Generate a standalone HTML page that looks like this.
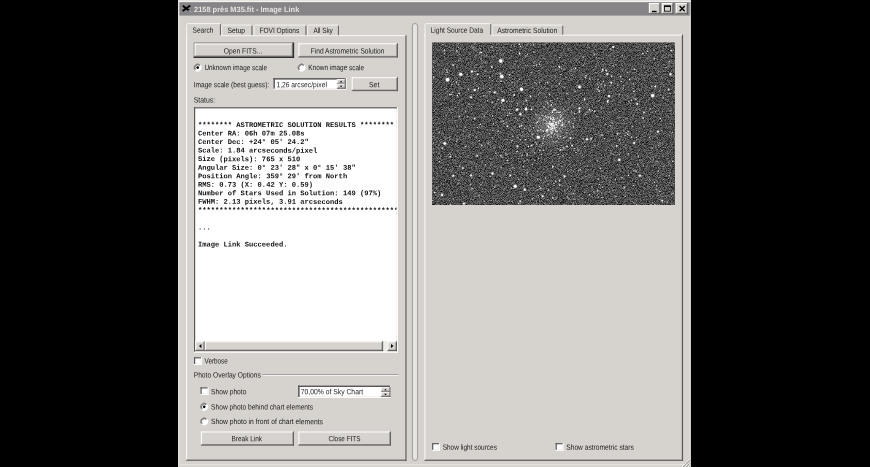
<!DOCTYPE html>
<html lang="en"><head><meta charset="utf-8"><title>2158 près M35.fit - Image Link</title>
<style>
html,body{margin:0;padding:0;background:#000;overflow:hidden}
svg{display:block;position:absolute;left:0;top:0}
text{opacity:0.999}
text{font-family:'Liberation Sans', sans-serif;font-size:7.7px;white-space:pre}
text.m{font-family:'Liberation Mono', monospace;font-size:7.1px;font-weight:bold}
</style></head>
<body>
<svg width="870" height="467" viewBox="0 0 870 467" shape-rendering="geometricPrecision" text-rendering="geometricPrecision">
<rect x="0.00" y="0.00" width="870.00" height="467.00" fill="#000"/>
<rect x="178.00" y="0.00" width="512.90" height="467.00" fill="#d6d3ce"/>
<rect x="178.30" y="0.50" width="512.40" height="1.70" fill="#f4f3f1"/>
<rect x="178.40" y="15.60" width="1.20" height="452.00" fill="#e4e2de"/>
<rect x="178.40" y="1.00" width="1.00" height="14.60" fill="#f0efec"/>
<rect x="689.60" y="15.60" width="0.80" height="451.40" fill="#e6e4e0"/>
<rect x="180.00" y="464.20" width="510.00" height="0.90" fill="#e6e4e0"/>
<rect x="179.40" y="2.20" width="510.30" height="13.40" fill="#868486"/>
<path d="M182.8 5.7 L189.2 10.7 M190.3 5.5 L182.6 11.1" stroke="#000" stroke-width="1.9" fill="none"/><path d="M188.2 10.6 L191.2 11.9" stroke="#aab6cc" stroke-width="0.9" fill="none"/>
<text x="194.00" y="12.00" transform="rotate(0.05 194.0 12.0)" textLength="105.30" lengthAdjust="spacingAndGlyphs" fill="#e6e4e0" font-weight="bold">2158 près M35.fit - Image Link</text>
<rect x="648.90" y="3.00" width="11.50" height="11.20" fill="#d6d3ce"/>
<rect x="648.90" y="3.00" width="10.75" height="1.00" fill="#ffffff"/>
<rect x="648.90" y="3.00" width="1.00" height="10.45" fill="#ffffff"/>
<rect x="649.65" y="12.70" width="10.00" height="0.75" fill="#848284"/>
<rect x="658.90" y="3.75" width="0.75" height="9.70" fill="#848284"/>
<rect x="648.90" y="13.45" width="11.50" height="0.75" fill="#404040"/>
<rect x="659.65" y="3.00" width="0.75" height="11.20" fill="#404040"/>
<rect x="661.80" y="3.00" width="11.70" height="11.20" fill="#d6d3ce"/>
<rect x="661.80" y="3.00" width="10.95" height="1.00" fill="#ffffff"/>
<rect x="661.80" y="3.00" width="1.00" height="10.45" fill="#ffffff"/>
<rect x="662.55" y="12.70" width="10.20" height="0.75" fill="#848284"/>
<rect x="672.00" y="3.75" width="0.75" height="9.70" fill="#848284"/>
<rect x="661.80" y="13.45" width="11.70" height="0.75" fill="#404040"/>
<rect x="672.75" y="3.00" width="0.75" height="11.20" fill="#404040"/>
<rect x="675.70" y="3.00" width="12.30" height="11.20" fill="#d6d3ce"/>
<rect x="675.70" y="3.00" width="11.55" height="1.00" fill="#ffffff"/>
<rect x="675.70" y="3.00" width="1.00" height="10.45" fill="#ffffff"/>
<rect x="676.45" y="12.70" width="10.80" height="0.75" fill="#848284"/>
<rect x="686.50" y="3.75" width="0.75" height="9.70" fill="#848284"/>
<rect x="675.70" y="13.45" width="12.30" height="0.75" fill="#404040"/>
<rect x="687.25" y="3.00" width="0.75" height="11.20" fill="#404040"/>
<rect x="652.00" y="10.80" width="4.60" height="1.40" fill="#000"/>
<rect x="664.5" y="6.2" width="5.9" height="5.0" fill="none" stroke="#000" stroke-width="0.8"/>
<rect x="664.10" y="5.40" width="6.70" height="1.50" fill="#000"/>
<path d="M679.6 6.1 L684.7 11.3 M684.7 6.1 L679.6 11.3" stroke="#000" stroke-width="1.4" fill="none"/>
<rect x="186.20" y="35.20" width="219.30" height="0.90" fill="#ffffff"/>
<rect x="186.20" y="35.20" width="0.90" height="424.55" fill="#ffffff"/>
<rect x="187.20" y="459.35" width="218.30" height="0.40" fill="#9a9896"/>
<rect x="405.10" y="36.20" width="0.40" height="423.55" fill="#9a9896"/>
<rect x="186.20" y="459.75" width="220.30" height="1.00" fill="#545250"/>
<rect x="405.50" y="35.20" width="1.00" height="425.55" fill="#545250"/>
<rect x="222.20" y="24.60" width="30.20" height="10.60" fill="#d6d3ce"/>
<rect x="222.30" y="24.60" width="29.10" height="0.90" fill="#f8f7f6"/>
<rect x="221.30" y="25.60" width="0.90" height="9.60" fill="#f8f7f6"/>
<rect x="251.20" y="25.60" width="0.50" height="9.60" fill="#9a9896"/>
<rect x="251.70" y="25.80" width="0.70" height="9.40" fill="#484848"/>
<rect x="254.50" y="24.60" width="51.90" height="10.60" fill="#d6d3ce"/>
<rect x="254.60" y="24.60" width="50.80" height="0.90" fill="#f8f7f6"/>
<rect x="253.60" y="25.60" width="0.90" height="9.60" fill="#f8f7f6"/>
<rect x="305.20" y="25.60" width="0.50" height="9.60" fill="#9a9896"/>
<rect x="305.70" y="25.80" width="0.70" height="9.40" fill="#484848"/>
<rect x="308.10" y="24.60" width="30.90" height="10.60" fill="#d6d3ce"/>
<rect x="308.20" y="24.60" width="29.80" height="0.90" fill="#f8f7f6"/>
<rect x="307.20" y="25.60" width="0.90" height="9.60" fill="#f8f7f6"/>
<rect x="337.80" y="25.60" width="0.50" height="9.60" fill="#9a9896"/>
<rect x="338.30" y="25.80" width="0.70" height="9.40" fill="#484848"/>
<rect x="187.10" y="23.20" width="33.20" height="13.50" fill="#d6d3ce"/>
<rect x="187.20" y="23.20" width="32.80" height="0.90" fill="#f8f7f6"/>
<rect x="186.20" y="24.20" width="0.90" height="12.50" fill="#f8f7f6"/>
<rect x="219.80" y="24.20" width="0.50" height="11.10" fill="#9a9896"/>
<rect x="220.30" y="24.40" width="0.70" height="10.90" fill="#484848"/>
<text x="192.50" y="32.80" transform="rotate(0.05 192.5 32.8)" textLength="20.90" lengthAdjust="spacingAndGlyphs" fill="#1a1a1a">Search</text>
<text x="227.60" y="33.00" transform="rotate(0.05 227.6 33.0)" textLength="17.50" lengthAdjust="spacingAndGlyphs" fill="#1a1a1a">Setup</text>
<text x="259.40" y="33.00" transform="rotate(0.05 259.4 33.0)" textLength="39.90" lengthAdjust="spacingAndGlyphs" fill="#1a1a1a">FOVI Options</text>
<text x="313.40" y="33.00" transform="rotate(0.05 313.4 33.0)" textLength="19.40" lengthAdjust="spacingAndGlyphs" fill="#1a1a1a">All Sky</text>
<rect x="193.70" y="42.50" width="100.40" height="15.50" fill="#7c7a77"/>
<rect x="193.70" y="56.50" width="100.40" height="1.50" fill="#303030"/>
<rect x="292.70" y="42.50" width="1.40" height="15.50" fill="#303030"/>
<rect x="194.60" y="43.50" width="98.20" height="13.10" fill="#d6d3ce"/>
<rect x="194.60" y="43.50" width="97.65" height="1.00" fill="#ffffff"/>
<rect x="194.60" y="43.50" width="1.00" height="12.55" fill="#ffffff"/>
<rect x="195.15" y="55.50" width="97.10" height="0.55" fill="#848284"/>
<rect x="291.70" y="44.05" width="0.55" height="12.00" fill="#848284"/>
<rect x="194.60" y="56.05" width="98.20" height="0.55" fill="#404040"/>
<rect x="292.25" y="43.50" width="0.55" height="13.10" fill="#404040"/>
<text x="223.70" y="53.40" transform="rotate(0.05 223.7 53.4)" textLength="38.60" lengthAdjust="spacingAndGlyphs" fill="#1a1a1a">Open FITS...</text>
<rect x="298.40" y="43.30" width="99.40" height="14.10" fill="#d6d3ce"/>
<rect x="298.40" y="43.30" width="98.65" height="1.00" fill="#ffffff"/>
<rect x="298.40" y="43.30" width="1.00" height="13.35" fill="#ffffff"/>
<rect x="299.15" y="55.90" width="97.90" height="0.75" fill="#848284"/>
<rect x="396.30" y="44.05" width="0.75" height="12.60" fill="#848284"/>
<rect x="298.40" y="56.65" width="99.40" height="0.75" fill="#404040"/>
<rect x="397.05" y="43.30" width="0.75" height="14.10" fill="#404040"/>
<text x="310.70" y="53.40" transform="rotate(0.05 310.7 53.4)" textLength="73.70" lengthAdjust="spacingAndGlyphs" fill="#1a1a1a">Find Astrometric Solution</text>
<circle cx="197.70" cy="67.60" r="3.60" fill="#ffffff"/>
<path d="M195.15 70.15 A3.6 3.6 0 0 1 200.25 65.05" stroke="#848284" stroke-width="1.0" fill="none"/>
<path d="M195.72 69.58 A2.8 2.8 0 0 1 199.68 65.62" stroke="#404040" stroke-width="0.8" fill="none"/>
<path d="M195.15 70.15 A3.6 3.6 0 0 0 200.25 65.05" stroke="#ffffff" stroke-width="0.9" fill="none"/>
<circle cx="197.70" cy="67.60" r="1.35" fill="#000"/>
<text x="204.40" y="70.10" transform="rotate(0.05 204.4 70.1)" textLength="62.60" lengthAdjust="spacingAndGlyphs" fill="#1a1a1a">Unknown image scale</text>
<circle cx="301.60" cy="67.60" r="3.60" fill="#ffffff"/>
<path d="M299.05 70.15 A3.6 3.6 0 0 1 304.15 65.05" stroke="#848284" stroke-width="1.0" fill="none"/>
<path d="M299.62 69.58 A2.8 2.8 0 0 1 303.58 65.62" stroke="#404040" stroke-width="0.8" fill="none"/>
<path d="M299.05 70.15 A3.6 3.6 0 0 0 304.15 65.05" stroke="#ffffff" stroke-width="0.9" fill="none"/>
<text x="308.30" y="70.10" transform="rotate(0.05 308.3 70.1)" textLength="55.80" lengthAdjust="spacingAndGlyphs" fill="#1a1a1a">Known image scale</text>
<text x="193.70" y="87.15" transform="rotate(0.05 193.7 87.2)" textLength="75.50" lengthAdjust="spacingAndGlyphs" fill="#1a1a1a">Image scale (best guess):</text>
<rect x="273.40" y="78.10" width="73.00" height="11.30" fill="#ffffff"/>
<rect x="273.40" y="88.60" width="73.00" height="0.80" fill="#ffffff"/>
<rect x="345.60" y="78.10" width="0.80" height="11.30" fill="#ffffff"/>
<rect x="274.90" y="88.00" width="70.70" height="0.60" fill="#eceae7"/>
<rect x="345.00" y="79.60" width="0.60" height="9.00" fill="#eceae7"/>
<rect x="273.40" y="78.10" width="72.20" height="1.50" fill="#585656"/>
<rect x="273.40" y="78.10" width="1.50" height="10.50" fill="#585656"/>
<text x="276.40" y="87.15" transform="rotate(0.05 276.4 87.2)" textLength="50.50" lengthAdjust="spacingAndGlyphs" fill="#1a1a1a">1,26 arcsec/pixel</text>
<rect x="336.90" y="79.00" width="8.80" height="4.80" fill="#d6d3ce"/>
<rect x="336.90" y="79.00" width="8.20" height="0.70" fill="#ffffff"/>
<rect x="336.90" y="79.00" width="0.70" height="4.20" fill="#ffffff"/>
<rect x="337.50" y="82.60" width="7.60" height="0.60" fill="#848284"/>
<rect x="344.50" y="79.60" width="0.60" height="3.60" fill="#848284"/>
<rect x="336.90" y="83.20" width="8.80" height="0.60" fill="#404040"/>
<rect x="345.10" y="79.00" width="0.60" height="4.80" fill="#404040"/>
<rect x="336.90" y="83.80" width="8.80" height="4.80" fill="#d6d3ce"/>
<rect x="336.90" y="83.80" width="8.20" height="0.70" fill="#ffffff"/>
<rect x="336.90" y="83.80" width="0.70" height="4.20" fill="#ffffff"/>
<rect x="337.50" y="87.40" width="7.60" height="0.60" fill="#848284"/>
<rect x="344.50" y="84.40" width="0.60" height="3.60" fill="#848284"/>
<rect x="336.90" y="88.00" width="8.80" height="0.60" fill="#404040"/>
<rect x="345.10" y="83.80" width="0.60" height="4.80" fill="#404040"/>
<path d="M339.70 82.20 L341.10 80.80 L342.50 82.20 Z M339.70 85.70 L341.10 87.10 L342.50 85.70 Z" fill="#000"/>
<rect x="351.70" y="77.20" width="46.10" height="13.90" fill="#d6d3ce"/>
<rect x="351.70" y="77.20" width="45.35" height="1.00" fill="#ffffff"/>
<rect x="351.70" y="77.20" width="1.00" height="13.15" fill="#ffffff"/>
<rect x="352.45" y="89.60" width="44.60" height="0.75" fill="#848284"/>
<rect x="396.30" y="77.95" width="0.75" height="12.40" fill="#848284"/>
<rect x="351.70" y="90.35" width="46.10" height="0.75" fill="#404040"/>
<rect x="397.05" y="77.20" width="0.75" height="13.90" fill="#404040"/>
<text x="369.00" y="87.15" transform="rotate(0.05 369.0 87.2)" textLength="10.30" lengthAdjust="spacingAndGlyphs" fill="#1a1a1a">Set</text>
<text x="193.70" y="102.60" transform="rotate(0.05 193.7 102.6)" textLength="21.50" lengthAdjust="spacingAndGlyphs" fill="#1a1a1a">Status:</text>
<rect x="194.00" y="107.20" width="203.80" height="245.30" fill="#ffffff"/>
<rect x="194.00" y="351.70" width="203.80" height="0.80" fill="#ffffff"/>
<rect x="397.00" y="107.20" width="0.80" height="245.30" fill="#ffffff"/>
<rect x="195.20" y="351.10" width="201.80" height="0.60" fill="#eceae7"/>
<rect x="396.40" y="108.40" width="0.60" height="243.30" fill="#eceae7"/>
<rect x="194.00" y="107.20" width="203.00" height="1.20" fill="#585656"/>
<rect x="194.00" y="107.20" width="1.20" height="244.50" fill="#585656"/>
<clipPath id="tc"><rect x="195.3" y="108.3" width="201.2" height="233"/></clipPath>
<g clip-path="url(#tc)" font-family="'Liberation Mono', monospace" font-size="7.1" fill="#111" xml:space="preserve">
<text class="m" x="197.9" y="126.98" transform="rotate(0.04 197.9 127.0)" textLength="196.19" lengthAdjust="spacingAndGlyphs">******** ASTROMETRIC SOLUTION RESULTS ********</text>
<text class="m" x="197.9" y="135.52" transform="rotate(0.04 197.9 135.5)" textLength="106.62" lengthAdjust="spacingAndGlyphs">Center RA: 06h 07m 25.08s</text>
<text class="m" x="197.9" y="144.06" transform="rotate(0.04 197.9 144.1)" textLength="110.89" lengthAdjust="spacingAndGlyphs">Center Dec: +24° 05' 24.2&quot;</text>
<text class="m" x="197.9" y="152.59" transform="rotate(0.04 197.9 152.6)" textLength="119.42" lengthAdjust="spacingAndGlyphs">Scale: 1.84 arcseconds/pixel</text>
<text class="m" x="197.9" y="161.12" transform="rotate(0.04 197.9 161.1)" textLength="102.36" lengthAdjust="spacingAndGlyphs">Size (pixels): 765 x 510</text>
<text class="m" x="197.9" y="169.66" transform="rotate(0.04 197.9 169.7)" textLength="157.80" lengthAdjust="spacingAndGlyphs">Angular Size: 0° 23' 28&quot; x 0° 15' 38&quot;</text>
<text class="m" x="197.9" y="178.19" transform="rotate(0.04 197.9 178.2)" textLength="149.27" lengthAdjust="spacingAndGlyphs">Position Angle: 359° 29' from North</text>
<text class="m" x="197.9" y="186.73" transform="rotate(0.04 197.9 186.7)" textLength="115.15" lengthAdjust="spacingAndGlyphs">RMS: 0.73 (X: 0.42 Y: 0.59)</text>
<text class="m" x="197.9" y="195.26" transform="rotate(0.04 197.9 195.3)" textLength="183.39" lengthAdjust="spacingAndGlyphs">Number of Stars Used in Solution: 149 (97%)</text>
<text class="m" x="197.9" y="203.80" transform="rotate(0.04 197.9 203.8)" textLength="145.01" lengthAdjust="spacingAndGlyphs">FWHM: 2.13 pixels, 3.91 arcseconds</text>
<text class="m" x="197.9" y="212.34" transform="rotate(0.04 197.9 212.3)" textLength="255.90" lengthAdjust="spacingAndGlyphs">************************************************************</text>
<text class="m" x="197.9" y="229.41" transform="rotate(0.04 197.9 229.4)" textLength="12.79" lengthAdjust="spacingAndGlyphs">...</text>
<text class="m" x="197.9" y="246.48" transform="rotate(0.04 197.9 246.5)" textLength="89.56" lengthAdjust="spacingAndGlyphs">Image Link Succeeded.</text>
</g>
<rect x="195.30" y="341.30" width="201.70" height="9.80" fill="#eeece9"/>
<rect x="195.30" y="341.30" width="9.50" height="9.80" fill="#d6d3ce"/>
<rect x="195.30" y="341.30" width="8.75" height="1.00" fill="#ffffff"/>
<rect x="195.30" y="341.30" width="1.00" height="9.05" fill="#ffffff"/>
<rect x="196.05" y="349.60" width="8.00" height="0.75" fill="#848284"/>
<rect x="203.30" y="342.05" width="0.75" height="8.30" fill="#848284"/>
<rect x="195.30" y="350.35" width="9.50" height="0.75" fill="#404040"/>
<rect x="204.05" y="341.30" width="0.75" height="9.80" fill="#404040"/>
<rect x="387.40" y="341.30" width="9.60" height="9.80" fill="#d6d3ce"/>
<rect x="387.40" y="341.30" width="8.85" height="1.00" fill="#ffffff"/>
<rect x="387.40" y="341.30" width="1.00" height="9.05" fill="#ffffff"/>
<rect x="388.15" y="349.60" width="8.10" height="0.75" fill="#848284"/>
<rect x="395.50" y="342.05" width="0.75" height="8.30" fill="#848284"/>
<rect x="387.40" y="350.35" width="9.60" height="0.75" fill="#404040"/>
<rect x="396.25" y="341.30" width="0.75" height="9.80" fill="#404040"/>
<rect x="204.80" y="341.30" width="178.30" height="9.80" fill="#d6d3ce"/>
<rect x="204.80" y="341.30" width="177.55" height="1.00" fill="#ffffff"/>
<rect x="204.80" y="341.30" width="1.00" height="9.05" fill="#ffffff"/>
<rect x="205.55" y="349.60" width="176.80" height="0.75" fill="#848284"/>
<rect x="381.60" y="342.05" width="0.75" height="8.30" fill="#848284"/>
<rect x="204.80" y="350.35" width="178.30" height="0.75" fill="#404040"/>
<rect x="382.35" y="341.30" width="0.75" height="9.80" fill="#404040"/>
<path d="M201.4 343.9 L199.0 346.1 L201.4 348.3 Z M391.0 343.9 L393.5 346.0 L391.0 348.1 Z" fill="#000"/>
<rect x="194.00" y="357.20" width="7.80" height="7.50" fill="#ffffff"/>
<rect x="194.00" y="363.90" width="7.80" height="0.80" fill="#ffffff"/>
<rect x="201.00" y="357.20" width="0.80" height="7.50" fill="#ffffff"/>
<rect x="195.20" y="363.30" width="5.80" height="0.60" fill="#eceae7"/>
<rect x="200.40" y="358.40" width="0.60" height="5.50" fill="#eceae7"/>
<rect x="194.00" y="357.20" width="7.00" height="1.20" fill="#585656"/>
<rect x="194.00" y="357.20" width="1.20" height="6.70" fill="#585656"/>
<text x="204.50" y="363.60" transform="rotate(0.05 204.5 363.6)" textLength="23.30" lengthAdjust="spacingAndGlyphs" fill="#1a1a1a">Verbose</text>
<text x="193.70" y="377.55" transform="rotate(0.05 193.7 377.6)" textLength="67.10" lengthAdjust="spacingAndGlyphs" fill="#1a1a1a">Photo Overlay Options</text>
<rect x="262.40" y="374.40" width="136.00" height="0.75" fill="#848284"/>
<rect x="262.40" y="375.15" width="136.00" height="0.75" fill="#ffffff"/>
<rect x="200.50" y="387.30" width="7.90" height="7.60" fill="#ffffff"/>
<rect x="200.50" y="394.10" width="7.90" height="0.80" fill="#ffffff"/>
<rect x="207.60" y="387.30" width="0.80" height="7.60" fill="#ffffff"/>
<rect x="201.70" y="393.50" width="5.90" height="0.60" fill="#eceae7"/>
<rect x="207.00" y="388.50" width="0.60" height="5.60" fill="#eceae7"/>
<rect x="200.50" y="387.30" width="7.10" height="1.20" fill="#585656"/>
<rect x="200.50" y="387.30" width="1.20" height="6.80" fill="#585656"/>
<text x="211.10" y="394.25" transform="rotate(0.05 211.1 394.2)" textLength="35.30" lengthAdjust="spacingAndGlyphs" fill="#1a1a1a">Show photo</text>
<rect x="298.10" y="385.50" width="92.90" height="12.30" fill="#ffffff"/>
<rect x="298.10" y="397.00" width="92.90" height="0.80" fill="#ffffff"/>
<rect x="390.20" y="385.50" width="0.80" height="12.30" fill="#ffffff"/>
<rect x="299.60" y="396.40" width="90.60" height="0.60" fill="#eceae7"/>
<rect x="389.60" y="387.00" width="0.60" height="10.00" fill="#eceae7"/>
<rect x="298.10" y="385.50" width="92.10" height="1.50" fill="#585656"/>
<rect x="298.10" y="385.50" width="1.50" height="11.50" fill="#585656"/>
<text x="300.70" y="394.25" transform="rotate(0.05 300.7 394.2)" textLength="62.40" lengthAdjust="spacingAndGlyphs" fill="#1a1a1a">70,00% of Sky Chart</text>
<rect x="381.00" y="387.00" width="9.40" height="4.90" fill="#d6d3ce"/>
<rect x="381.00" y="387.00" width="8.80" height="0.70" fill="#ffffff"/>
<rect x="381.00" y="387.00" width="0.70" height="4.30" fill="#ffffff"/>
<rect x="381.60" y="390.70" width="8.20" height="0.60" fill="#848284"/>
<rect x="389.20" y="387.60" width="0.60" height="3.70" fill="#848284"/>
<rect x="381.00" y="391.30" width="9.40" height="0.60" fill="#404040"/>
<rect x="389.80" y="387.00" width="0.60" height="4.90" fill="#404040"/>
<rect x="381.00" y="391.90" width="9.40" height="4.90" fill="#d6d3ce"/>
<rect x="381.00" y="391.90" width="8.80" height="0.70" fill="#ffffff"/>
<rect x="381.00" y="391.90" width="0.70" height="4.30" fill="#ffffff"/>
<rect x="381.60" y="395.60" width="8.20" height="0.60" fill="#848284"/>
<rect x="389.20" y="392.50" width="0.60" height="3.70" fill="#848284"/>
<rect x="381.00" y="396.20" width="9.40" height="0.60" fill="#404040"/>
<rect x="389.80" y="391.90" width="0.60" height="4.90" fill="#404040"/>
<path d="M384.10 390.30 L385.50 388.90 L386.90 390.30 Z M384.10 393.80 L385.50 395.20 L386.90 393.80 Z" fill="#000"/>
<circle cx="204.20" cy="406.80" r="3.60" fill="#ffffff"/>
<path d="M201.65 409.35 A3.6 3.6 0 0 1 206.75 404.25" stroke="#848284" stroke-width="1.0" fill="none"/>
<path d="M202.22 408.78 A2.8 2.8 0 0 1 206.18 404.82" stroke="#404040" stroke-width="0.8" fill="none"/>
<path d="M201.65 409.35 A3.6 3.6 0 0 0 206.75 404.25" stroke="#ffffff" stroke-width="0.9" fill="none"/>
<circle cx="204.20" cy="406.80" r="1.35" fill="#000"/>
<text x="211.10" y="409.40" transform="rotate(0.05 211.1 409.4)" textLength="102.10" lengthAdjust="spacingAndGlyphs" fill="#1a1a1a">Show photo behind chart elements</text>
<circle cx="204.20" cy="421.50" r="3.60" fill="#ffffff"/>
<path d="M201.65 424.05 A3.6 3.6 0 0 1 206.75 418.95" stroke="#848284" stroke-width="1.0" fill="none"/>
<path d="M202.22 423.48 A2.8 2.8 0 0 1 206.18 419.52" stroke="#404040" stroke-width="0.8" fill="none"/>
<path d="M201.65 424.05 A3.6 3.6 0 0 0 206.75 418.95" stroke="#ffffff" stroke-width="0.9" fill="none"/>
<text x="211.10" y="424.05" transform="rotate(0.05 211.1 424.1)" textLength="111.80" lengthAdjust="spacingAndGlyphs" fill="#1a1a1a">Show photo in front of chart elements</text>
<rect x="200.90" y="431.50" width="93.10" height="14.00" fill="#d6d3ce"/>
<rect x="200.90" y="431.50" width="92.35" height="1.00" fill="#ffffff"/>
<rect x="200.90" y="431.50" width="1.00" height="13.25" fill="#ffffff"/>
<rect x="201.65" y="444.00" width="91.60" height="0.75" fill="#848284"/>
<rect x="292.50" y="432.25" width="0.75" height="12.50" fill="#848284"/>
<rect x="200.90" y="444.75" width="93.10" height="0.75" fill="#404040"/>
<rect x="293.25" y="431.50" width="0.75" height="14.00" fill="#404040"/>
<text x="231.50" y="441.30" transform="rotate(0.05 231.5 441.3)" textLength="30.60" lengthAdjust="spacingAndGlyphs" fill="#1a1a1a">Break Link</text>
<rect x="298.40" y="431.50" width="92.50" height="14.00" fill="#d6d3ce"/>
<rect x="298.40" y="431.50" width="91.75" height="1.00" fill="#ffffff"/>
<rect x="298.40" y="431.50" width="1.00" height="13.25" fill="#ffffff"/>
<rect x="299.15" y="444.00" width="91.00" height="0.75" fill="#848284"/>
<rect x="389.40" y="432.25" width="0.75" height="12.50" fill="#848284"/>
<rect x="298.40" y="444.75" width="92.50" height="0.75" fill="#404040"/>
<rect x="390.15" y="431.50" width="0.75" height="14.00" fill="#404040"/>
<text x="328.60" y="441.30" transform="rotate(0.05 328.6 441.3)" textLength="31.90" lengthAdjust="spacingAndGlyphs" fill="#1a1a1a">Close FITS</text>
<rect x="412.4" y="23.5" width="5.2" height="437" rx="2.6" fill="#e6e4e2" stroke="#8c8a88" stroke-width="0.8"/>
<rect x="424.50" y="34.60" width="257.55" height="0.90" fill="#ffffff"/>
<rect x="424.50" y="34.60" width="0.90" height="425.20" fill="#ffffff"/>
<rect x="425.50" y="459.40" width="256.55" height="0.40" fill="#9a9896"/>
<rect x="681.65" y="35.60" width="0.40" height="424.20" fill="#9a9896"/>
<rect x="424.50" y="459.80" width="258.55" height="1.00" fill="#545250"/>
<rect x="682.05" y="34.60" width="1.00" height="426.20" fill="#545250"/>
<rect x="492.50" y="24.60" width="70.70" height="10.00" fill="#d6d3ce"/>
<rect x="492.60" y="24.60" width="69.60" height="0.90" fill="#f8f7f6"/>
<rect x="491.60" y="25.60" width="0.90" height="9.00" fill="#f8f7f6"/>
<rect x="562.00" y="25.60" width="0.50" height="9.00" fill="#9a9896"/>
<rect x="562.50" y="25.80" width="0.70" height="8.80" fill="#484848"/>
<rect x="425.40" y="23.20" width="65.10" height="12.90" fill="#d6d3ce"/>
<rect x="425.50" y="23.20" width="64.70" height="0.90" fill="#f8f7f6"/>
<rect x="424.50" y="24.20" width="0.90" height="11.90" fill="#f8f7f6"/>
<rect x="490.00" y="24.20" width="0.50" height="10.50" fill="#9a9896"/>
<rect x="490.50" y="24.40" width="0.70" height="10.30" fill="#484848"/>
<text x="430.70" y="32.80" transform="rotate(0.05 430.7 32.8)" textLength="52.40" lengthAdjust="spacingAndGlyphs" fill="#1a1a1a">Light Source Data</text>
<text x="497.30" y="33.00" transform="rotate(0.05 497.3 33.0)" textLength="60.00" lengthAdjust="spacingAndGlyphs" fill="#1a1a1a">Astrometric Solution</text>
<g id="stars" transform="translate(432.2,42.6)"><filter id="nz" x="0" y="0" width="100%" height="100%" color-interpolation-filters="sRGB"><feTurbulence type="fractalNoise" baseFrequency="1.37" numOctaves="1" seed="7" stitchTiles="noStitch"/><feColorMatrix type="matrix" values="1 0 0 0 0 1 0 0 0 0 1 0 0 0 0 0 0 0 0 1"/><feGaussianBlur stdDeviation="0.5"/><feColorMatrix type="matrix" values="1.0 0 0 0 -0.205 1.0 0 0 0 -0.205 1.0 0 0 0 -0.205 0 0 0 0 1"/></filter>
<radialGradient id="cg" cx="119" cy="82" r="26" gradientUnits="userSpaceOnUse"><stop offset="0" stop-color="#fff" stop-opacity="0.3"/><stop offset="0.35" stop-color="#fff" stop-opacity="0.16"/><stop offset="1" stop-color="#fff" stop-opacity="0"/></radialGradient>
<clipPath id="sc"><rect width="242.6" height="162.4"/></clipPath>
<g clip-path="url(#sc)">
<rect width="243" height="163" fill="#484848"/>
<rect width="243" height="163" filter="url(#nz)"/>
<circle cx="119" cy="82" r="26" fill="url(#cg)"/>
<g fill="#fff"><circle cx="101.2" cy="1.7" r="0.7" opacity="0.79"/><circle cx="207.8" cy="151.9" r="0.5" opacity="0.66"/><circle cx="39.3" cy="20.3" r="0.5" opacity="0.49"/><circle cx="152.4" cy="99.7" r="0.45" opacity="0.55"/><circle cx="232.8" cy="14.9" r="0.6" opacity="0.58"/><circle cx="122.5" cy="24.1" r="0.6" opacity="0.39"/><circle cx="203.4" cy="52.5" r="0.5" opacity="0.54"/><circle cx="235.1" cy="159.5" r="0.6" opacity="0.58"/><circle cx="1.6" cy="108.2" r="0.45" opacity="0.77"/><circle cx="43.5" cy="16.2" r="0.5" opacity="0.41"/><circle cx="165.6" cy="29.6" r="0.5" opacity="0.48"/><circle cx="127.2" cy="115.6" r="0.7" opacity="0.53"/><circle cx="9.8" cy="19.5" r="0.5" opacity="0.47"/><circle cx="194.9" cy="90.5" r="0.45" opacity="0.49"/><circle cx="105.4" cy="149.3" r="0.45" opacity="0.37"/><circle cx="39.9" cy="160.3" r="0.7" opacity="0.36"/><circle cx="234.5" cy="57.0" r="0.5" opacity="0.44"/><circle cx="78.7" cy="8.0" r="0.6" opacity="0.59"/><circle cx="94.3" cy="130.2" r="0.45" opacity="0.78"/><circle cx="187.7" cy="59.9" r="0.6" opacity="0.63"/><circle cx="29.5" cy="101.4" r="0.4" opacity="0.69"/><circle cx="79.2" cy="99.4" r="0.5" opacity="0.86"/><circle cx="133.6" cy="59.4" r="0.6" opacity="0.73"/><circle cx="135.2" cy="13.0" r="0.45" opacity="0.84"/><circle cx="81.5" cy="33.1" r="0.45" opacity="0.51"/><circle cx="130.5" cy="84.7" r="0.4" opacity="0.43"/><circle cx="159.8" cy="144.4" r="0.7" opacity="0.68"/><circle cx="194.0" cy="15.6" r="0.55" opacity="0.76"/><circle cx="16.1" cy="122.5" r="0.5" opacity="0.58"/><circle cx="59.1" cy="143.2" r="0.4" opacity="0.56"/><circle cx="42.8" cy="29.0" r="0.55" opacity="0.72"/><circle cx="125.9" cy="40.6" r="0.5" opacity="0.63"/><circle cx="101.5" cy="19.6" r="0.6" opacity="0.60"/><circle cx="47.4" cy="101.3" r="0.45" opacity="0.76"/><circle cx="129.0" cy="38.0" r="0.55" opacity="0.51"/><circle cx="130.8" cy="113.0" r="0.6" opacity="0.84"/><circle cx="14.4" cy="126.7" r="0.4" opacity="0.55"/><circle cx="125.6" cy="93.6" r="0.6" opacity="0.77"/><circle cx="38.0" cy="143.5" r="0.6" opacity="0.37"/><circle cx="181.3" cy="111.8" r="0.5" opacity="0.52"/><circle cx="148.3" cy="50.8" r="0.5" opacity="0.61"/><circle cx="64.4" cy="4.8" r="0.5" opacity="0.42"/><circle cx="0.5" cy="158.0" r="0.7" opacity="0.86"/><circle cx="7.4" cy="98.2" r="0.45" opacity="0.82"/><circle cx="119.2" cy="44.4" r="0.45" opacity="0.85"/><circle cx="176.3" cy="137.9" r="0.4" opacity="0.69"/><circle cx="89.5" cy="141.0" r="0.5" opacity="0.45"/><circle cx="19.9" cy="133.3" r="0.45" opacity="0.53"/><circle cx="48.8" cy="24.4" r="0.55" opacity="0.37"/><circle cx="242.3" cy="63.9" r="0.7" opacity="0.37"/><circle cx="24.2" cy="24.2" r="0.45" opacity="0.49"/><circle cx="129.4" cy="25.8" r="0.6" opacity="0.51"/><circle cx="208.1" cy="15.0" r="0.55" opacity="0.46"/><circle cx="122.5" cy="156.7" r="0.55" opacity="0.36"/><circle cx="126.4" cy="95.9" r="0.5" opacity="0.67"/><circle cx="190.0" cy="26.7" r="0.5" opacity="0.59"/><circle cx="90.3" cy="4.5" r="0.5" opacity="0.54"/><circle cx="198.4" cy="107.3" r="0.4" opacity="0.53"/><circle cx="106.3" cy="52.0" r="0.5" opacity="0.79"/><circle cx="30.5" cy="92.2" r="0.4" opacity="0.66"/><circle cx="118.1" cy="19.3" r="0.55" opacity="0.45"/><circle cx="228.4" cy="50.3" r="0.45" opacity="0.64"/><circle cx="111.9" cy="76.5" r="0.5" opacity="0.47"/><circle cx="54.0" cy="121.5" r="0.45" opacity="0.56"/><circle cx="132.0" cy="162.9" r="0.6" opacity="0.89"/><circle cx="224.5" cy="146.7" r="0.55" opacity="0.67"/><circle cx="133.9" cy="34.9" r="0.6" opacity="0.75"/><circle cx="206.4" cy="2.4" r="0.45" opacity="0.39"/><circle cx="218.6" cy="11.4" r="0.7" opacity="0.42"/><circle cx="64.5" cy="38.4" r="0.5" opacity="0.47"/><circle cx="89.9" cy="112.3" r="0.6" opacity="0.57"/><circle cx="60.5" cy="73.4" r="0.7" opacity="0.85"/><circle cx="26.4" cy="4.9" r="0.55" opacity="0.85"/><circle cx="89.4" cy="65.2" r="0.6" opacity="0.40"/><circle cx="113.1" cy="53.4" r="0.5" opacity="0.52"/><circle cx="137.6" cy="27.9" r="0.6" opacity="0.69"/><circle cx="223.7" cy="42.7" r="0.6" opacity="0.78"/><circle cx="42.8" cy="0.9" r="0.6" opacity="0.75"/><circle cx="5.8" cy="153.2" r="0.5" opacity="0.73"/><circle cx="49.0" cy="102.0" r="0.4" opacity="0.75"/><circle cx="89.2" cy="152.6" r="0.5" opacity="0.48"/><circle cx="223.6" cy="33.3" r="0.55" opacity="0.35"/><circle cx="36.8" cy="94.9" r="0.7" opacity="0.42"/><circle cx="51.8" cy="136.5" r="0.55" opacity="0.52"/><circle cx="69.5" cy="34.2" r="0.5" opacity="0.86"/><circle cx="141.2" cy="128.9" r="0.6" opacity="0.75"/><circle cx="196.9" cy="93.0" r="0.5" opacity="0.63"/><circle cx="130.5" cy="107.3" r="0.7" opacity="0.74"/><circle cx="222.8" cy="25.9" r="0.5" opacity="0.38"/><circle cx="23.9" cy="146.7" r="0.4" opacity="0.50"/><circle cx="76.5" cy="67.3" r="0.5" opacity="0.61"/><circle cx="238.5" cy="112.2" r="0.4" opacity="0.76"/><circle cx="55.9" cy="101.2" r="0.7" opacity="0.60"/><circle cx="152.3" cy="58.0" r="0.7" opacity="0.72"/><circle cx="221.9" cy="63.1" r="0.5" opacity="0.53"/><circle cx="146.0" cy="70.1" r="0.5" opacity="0.48"/><circle cx="145.9" cy="74.6" r="0.5" opacity="0.72"/><circle cx="121.0" cy="98.9" r="0.7" opacity="0.56"/><circle cx="167.7" cy="92.6" r="0.5" opacity="0.79"/><circle cx="32.1" cy="73.6" r="0.4" opacity="0.61"/><circle cx="89.3" cy="66.7" r="0.5" opacity="0.47"/><circle cx="123.5" cy="80.1" r="0.7" opacity="0.88"/><circle cx="55.5" cy="67.7" r="0.4" opacity="0.43"/><circle cx="129.7" cy="124.0" r="0.6" opacity="0.87"/><circle cx="29.9" cy="63.1" r="0.5" opacity="0.39"/><circle cx="160.2" cy="0.2" r="0.5" opacity="0.49"/><circle cx="60.5" cy="87.7" r="0.5" opacity="0.87"/><circle cx="236.8" cy="50.6" r="0.5" opacity="0.57"/><circle cx="141.2" cy="96.0" r="0.5" opacity="0.70"/><circle cx="57.3" cy="16.2" r="0.6" opacity="0.51"/><circle cx="14.8" cy="21.0" r="0.55" opacity="0.46"/><circle cx="65.1" cy="139.0" r="0.5" opacity="0.38"/><circle cx="227.6" cy="148.8" r="0.7" opacity="0.76"/><circle cx="172.9" cy="7.3" r="0.7" opacity="0.43"/><circle cx="8.7" cy="61.6" r="0.55" opacity="0.58"/><circle cx="42.1" cy="25.2" r="0.55" opacity="0.63"/><circle cx="119.5" cy="17.1" r="0.6" opacity="0.39"/><circle cx="37.9" cy="11.7" r="0.7" opacity="0.54"/><circle cx="226.8" cy="55.8" r="0.45" opacity="0.51"/><circle cx="131.6" cy="66.1" r="0.5" opacity="0.44"/><circle cx="114.8" cy="90.0" r="0.55" opacity="0.74"/><circle cx="93.5" cy="72.4" r="0.5" opacity="0.42"/><circle cx="166.1" cy="90.5" r="0.55" opacity="0.49"/><circle cx="168.1" cy="47.2" r="0.4" opacity="0.63"/><circle cx="89.6" cy="65.4" r="0.45" opacity="0.56"/><circle cx="218.7" cy="17.8" r="0.55" opacity="0.44"/><circle cx="195.2" cy="30.1" r="0.6" opacity="0.81"/><circle cx="26.5" cy="17.6" r="0.45" opacity="0.88"/><circle cx="174.7" cy="73.2" r="0.4" opacity="0.57"/><circle cx="69.4" cy="85.4" r="0.45" opacity="0.79"/><circle cx="180.3" cy="103.8" r="0.5" opacity="0.43"/><circle cx="59.3" cy="19.5" r="0.5" opacity="0.71"/><circle cx="135.6" cy="128.9" r="0.55" opacity="0.78"/><circle cx="51.9" cy="63.7" r="0.4" opacity="0.51"/><circle cx="218.3" cy="116.0" r="0.55" opacity="0.59"/><circle cx="101.7" cy="161.5" r="0.5" opacity="0.61"/><circle cx="142.8" cy="57.1" r="0.55" opacity="0.45"/><circle cx="53.2" cy="122.4" r="0.7" opacity="0.67"/><circle cx="209.6" cy="90.4" r="0.45" opacity="0.42"/><circle cx="156.0" cy="134.9" r="0.4" opacity="0.42"/><circle cx="221.5" cy="123.4" r="0.4" opacity="0.49"/><circle cx="201.5" cy="48.7" r="0.7" opacity="0.80"/><circle cx="117.0" cy="95.3" r="0.5" opacity="0.70"/><circle cx="6.1" cy="105.5" r="0.4" opacity="0.52"/><circle cx="237.1" cy="12.0" r="0.45" opacity="0.60"/><circle cx="236.8" cy="120.6" r="0.45" opacity="0.70"/><circle cx="127.2" cy="139.0" r="0.5" opacity="0.82"/><circle cx="105.1" cy="136.5" r="0.6" opacity="0.86"/><circle cx="94.8" cy="2.3" r="0.5" opacity="0.42"/><circle cx="169.6" cy="147.6" r="0.5" opacity="0.42"/><circle cx="66.4" cy="85.7" r="0.4" opacity="0.41"/><circle cx="97.8" cy="52.7" r="0.55" opacity="0.62"/><circle cx="44.3" cy="122.2" r="0.5" opacity="0.36"/><circle cx="29.6" cy="62.2" r="0.4" opacity="0.45"/><circle cx="99.1" cy="2.1" r="0.55" opacity="0.60"/><circle cx="122.1" cy="91.9" r="0.5" opacity="0.50"/><circle cx="99.2" cy="30.1" r="0.6" opacity="0.74"/><circle cx="236.8" cy="15.8" r="0.5" opacity="0.36"/><circle cx="186.8" cy="75.2" r="0.55" opacity="0.80"/><circle cx="25.3" cy="124.1" r="0.5" opacity="0.59"/><circle cx="31.9" cy="6.8" r="0.45" opacity="0.80"/><circle cx="106.6" cy="154.8" r="0.5" opacity="0.37"/><circle cx="77.3" cy="67.2" r="0.7" opacity="0.54"/><circle cx="136.4" cy="79.6" r="0.6" opacity="0.53"/><circle cx="19.4" cy="127.6" r="0.5" opacity="0.62"/><circle cx="185.3" cy="87.3" r="0.5" opacity="0.50"/><circle cx="77.8" cy="127.7" r="0.5" opacity="0.89"/><circle cx="134.0" cy="50.5" r="0.7" opacity="0.64"/><circle cx="168.2" cy="55.2" r="0.4" opacity="0.60"/><circle cx="105.4" cy="128.8" r="0.5" opacity="0.75"/><circle cx="139.6" cy="69.6" r="0.6" opacity="0.77"/><circle cx="198.7" cy="74.9" r="0.5" opacity="0.80"/><circle cx="230.8" cy="15.8" r="0.4" opacity="0.74"/><circle cx="177.5" cy="149.3" r="0.7" opacity="0.77"/><circle cx="235.3" cy="108.6" r="0.6" opacity="0.37"/><circle cx="90.7" cy="138.9" r="0.4" opacity="0.46"/><circle cx="6.3" cy="110.5" r="0.55" opacity="0.71"/><circle cx="48.8" cy="141.9" r="0.5" opacity="0.81"/><circle cx="102.6" cy="39.9" r="0.45" opacity="0.86"/><circle cx="215.0" cy="0.4" r="0.45" opacity="0.84"/><circle cx="204.4" cy="129.3" r="0.5" opacity="0.75"/><circle cx="183.7" cy="153.9" r="0.6" opacity="0.81"/><circle cx="226.6" cy="22.6" r="0.5" opacity="0.63"/><circle cx="230.5" cy="100.1" r="0.5" opacity="0.37"/><circle cx="38.5" cy="141.9" r="0.7" opacity="0.74"/><circle cx="79.8" cy="70.8" r="0.5" opacity="0.78"/><circle cx="123.5" cy="34.4" r="0.4" opacity="0.58"/><circle cx="108.0" cy="19.1" r="0.6" opacity="0.45"/><circle cx="90.4" cy="130.8" r="0.4" opacity="0.89"/><circle cx="66.8" cy="55.5" r="0.7" opacity="0.47"/><circle cx="208.0" cy="157.1" r="0.5" opacity="0.76"/><circle cx="64.5" cy="79.4" r="0.7" opacity="0.35"/><circle cx="79.7" cy="122.2" r="0.55" opacity="0.71"/><circle cx="6.3" cy="59.6" r="0.6" opacity="0.77"/><circle cx="5.4" cy="115.8" r="0.45" opacity="0.77"/><circle cx="242.1" cy="118.7" r="0.5" opacity="0.60"/><circle cx="8.9" cy="128.3" r="0.55" opacity="0.39"/><circle cx="137.4" cy="127.8" r="0.45" opacity="0.68"/><circle cx="195.1" cy="52.9" r="0.7" opacity="0.36"/><circle cx="26.2" cy="141.0" r="0.55" opacity="0.73"/><circle cx="33.3" cy="68.5" r="0.7" opacity="0.90"/><circle cx="171.6" cy="122.5" r="0.7" opacity="0.61"/><circle cx="40.0" cy="146.1" r="0.7" opacity="0.89"/><circle cx="87.1" cy="36.7" r="0.7" opacity="0.74"/><circle cx="224.9" cy="118.9" r="0.5" opacity="0.75"/><circle cx="199.2" cy="150.4" r="0.5" opacity="0.40"/><circle cx="60.0" cy="139.5" r="0.45" opacity="0.65"/><circle cx="155.7" cy="1.6" r="0.5" opacity="0.75"/><circle cx="117.8" cy="111.1" r="0.5" opacity="0.49"/><circle cx="26.4" cy="41.7" r="0.7" opacity="0.76"/><circle cx="132.6" cy="1.2" r="0.7" opacity="0.35"/><circle cx="172.8" cy="21.9" r="0.45" opacity="0.71"/><circle cx="97.8" cy="82.8" r="0.6" opacity="0.40"/><circle cx="192.0" cy="13.8" r="0.5" opacity="0.56"/><circle cx="221.3" cy="116.3" r="0.55" opacity="0.66"/><circle cx="102.2" cy="110.0" r="0.7" opacity="0.74"/><circle cx="40.8" cy="5.8" r="0.6" opacity="0.44"/><circle cx="13.8" cy="32.3" r="0.55" opacity="0.80"/><circle cx="170.4" cy="98.8" r="0.45" opacity="0.71"/><circle cx="146.0" cy="106.6" r="0.5" opacity="0.43"/><circle cx="89.8" cy="113.4" r="0.5" opacity="0.75"/><circle cx="164.2" cy="11.8" r="0.5" opacity="0.52"/><circle cx="24.4" cy="0.3" r="0.5" opacity="0.56"/><circle cx="202.5" cy="43.6" r="0.6" opacity="0.35"/><circle cx="102.5" cy="117.6" r="0.7" opacity="0.62"/><circle cx="124.4" cy="155.4" r="0.55" opacity="0.66"/><circle cx="23.0" cy="64.6" r="0.5" opacity="0.81"/><circle cx="155.8" cy="120.0" r="0.4" opacity="0.67"/><circle cx="83.9" cy="11.2" r="0.5" opacity="0.65"/><circle cx="183.0" cy="99.7" r="0.5" opacity="0.36"/><circle cx="210.0" cy="32.1" r="0.55" opacity="0.71"/><circle cx="76.7" cy="43.4" r="0.5" opacity="0.78"/><circle cx="217.2" cy="1.3" r="0.7" opacity="0.45"/><circle cx="93.8" cy="47.0" r="0.6" opacity="0.45"/><circle cx="205.6" cy="122.2" r="0.7" opacity="0.82"/><circle cx="21.2" cy="38.9" r="0.5" opacity="0.81"/><circle cx="242.0" cy="1.8" r="0.7" opacity="0.63"/><circle cx="183.1" cy="136.9" r="0.7" opacity="0.84"/><circle cx="17.9" cy="150.3" r="0.4" opacity="0.70"/><circle cx="205.9" cy="38.0" r="0.45" opacity="0.35"/><circle cx="166.9" cy="40.3" r="0.6" opacity="0.45"/><circle cx="85.7" cy="52.1" r="0.45" opacity="0.36"/><circle cx="93.0" cy="147.8" r="0.5" opacity="0.46"/><circle cx="132.9" cy="106.1" r="0.7" opacity="0.46"/><circle cx="30.0" cy="149.7" r="0.5" opacity="0.80"/><circle cx="142.3" cy="75.6" r="0.5" opacity="0.82"/><circle cx="195.0" cy="41.4" r="0.6" opacity="0.68"/><circle cx="95.5" cy="90.6" r="0.6" opacity="0.40"/><circle cx="203.6" cy="138.7" r="0.5" opacity="0.79"/><circle cx="124.9" cy="106.0" r="0.55" opacity="0.80"/><circle cx="169.7" cy="128.4" r="0.6" opacity="0.85"/><circle cx="228.1" cy="63.2" r="0.5" opacity="0.78"/><circle cx="4.8" cy="87.0" r="0.5" opacity="0.56"/><circle cx="38.7" cy="156.8" r="0.45" opacity="0.48"/><circle cx="207.6" cy="59.4" r="0.4" opacity="0.55"/><circle cx="60.5" cy="95.3" r="0.5" opacity="0.78"/><circle cx="107.7" cy="103.4" r="0.5" opacity="0.82"/><circle cx="18.3" cy="111.8" r="0.5" opacity="0.72"/><circle cx="211.8" cy="79.0" r="0.45" opacity="0.82"/><circle cx="146.5" cy="108.1" r="0.6" opacity="0.75"/><circle cx="72.3" cy="49.3" r="0.45" opacity="0.65"/><circle cx="212.6" cy="25.4" r="0.4" opacity="0.86"/><circle cx="18.1" cy="150.9" r="0.45" opacity="0.80"/><circle cx="31.1" cy="141.6" r="0.4" opacity="0.76"/><circle cx="125.0" cy="55.9" r="0.6" opacity="0.68"/><circle cx="78.5" cy="13.4" r="0.4" opacity="0.39"/><circle cx="198.0" cy="62.3" r="0.5" opacity="0.52"/><circle cx="112.3" cy="138.1" r="0.5" opacity="0.44"/><circle cx="230.5" cy="14.1" r="0.5" opacity="0.65"/><circle cx="218.3" cy="66.1" r="0.5" opacity="0.84"/><circle cx="0.3" cy="40.9" r="0.5" opacity="0.87"/><circle cx="1.9" cy="67.3" r="0.5" opacity="0.79"/><circle cx="38.6" cy="162.0" r="0.4" opacity="0.79"/><circle cx="229.7" cy="87.8" r="0.5" opacity="0.81"/><circle cx="49.6" cy="83.4" r="0.5" opacity="0.89"/><circle cx="93.8" cy="102.2" r="0.5" opacity="0.40"/><circle cx="153.7" cy="107.9" r="0.4" opacity="0.87"/><circle cx="82.4" cy="125.4" r="0.55" opacity="0.78"/><circle cx="121.5" cy="149.2" r="0.45" opacity="0.89"/><circle cx="95.6" cy="117.0" r="0.5" opacity="0.71"/><circle cx="236.5" cy="23.1" r="0.55" opacity="0.41"/><circle cx="75.5" cy="153.2" r="0.5" opacity="0.74"/><circle cx="193.0" cy="153.5" r="0.6" opacity="0.85"/><circle cx="225.0" cy="162.6" r="0.5" opacity="0.66"/><circle cx="175.2" cy="159.4" r="0.55" opacity="0.61"/><circle cx="80.6" cy="124.7" r="0.6" opacity="0.76"/><circle cx="46.4" cy="89.9" r="0.4" opacity="0.59"/><circle cx="10.9" cy="157.9" r="0.4" opacity="0.45"/><circle cx="66.8" cy="65.6" r="0.5" opacity="0.87"/><circle cx="216.8" cy="14.1" r="0.5" opacity="0.88"/><circle cx="50.8" cy="28.1" r="0.4" opacity="0.64"/><circle cx="226.9" cy="115.9" r="0.6" opacity="0.43"/><circle cx="107.3" cy="109.5" r="0.55" opacity="0.38"/><circle cx="12.1" cy="10.9" r="0.55" opacity="0.79"/><circle cx="127.0" cy="46.3" r="0.55" opacity="0.36"/><circle cx="39.8" cy="78.4" r="0.4" opacity="0.67"/><circle cx="18.7" cy="128.6" r="0.4" opacity="0.57"/><circle cx="159.8" cy="42.7" r="0.4" opacity="0.53"/><circle cx="14.1" cy="126.8" r="0.7" opacity="0.37"/><circle cx="211.1" cy="122.8" r="0.7" opacity="0.56"/><circle cx="166.1" cy="154.5" r="0.7" opacity="0.79"/><circle cx="183.6" cy="153.3" r="0.7" opacity="0.66"/><circle cx="13.7" cy="96.2" r="0.5" opacity="0.71"/><circle cx="107.2" cy="143.4" r="0.55" opacity="0.52"/><circle cx="192.9" cy="92.8" r="0.7" opacity="0.74"/><circle cx="11.4" cy="141.7" r="0.5" opacity="0.57"/><circle cx="229.0" cy="72.3" r="0.6" opacity="0.41"/><circle cx="209.7" cy="133.2" r="0.55" opacity="0.64"/><circle cx="64.0" cy="108.2" r="0.4" opacity="0.43"/><circle cx="95.6" cy="22.5" r="0.6" opacity="0.88"/><circle cx="231.0" cy="137.0" r="0.5" opacity="0.87"/><circle cx="230.3" cy="159.6" r="0.5" opacity="0.43"/><circle cx="58.7" cy="119.7" r="0.5" opacity="0.54"/><circle cx="35.7" cy="155.8" r="0.45" opacity="0.50"/><circle cx="169.2" cy="112.3" r="0.5" opacity="0.55"/><circle cx="191.6" cy="88.5" r="0.7" opacity="0.72"/><circle cx="7.1" cy="115.4" r="0.5" opacity="0.70"/><circle cx="100.0" cy="45.0" r="0.7" opacity="0.66"/><circle cx="152.6" cy="149.5" r="0.6" opacity="0.67"/><circle cx="237.3" cy="18.8" r="0.55" opacity="0.66"/><circle cx="93.4" cy="136.5" r="0.4" opacity="0.87"/><circle cx="73.8" cy="34.5" r="0.45" opacity="0.72"/><circle cx="75.3" cy="111.7" r="0.6" opacity="0.60"/><circle cx="132.5" cy="67.9" r="0.55" opacity="0.44"/><circle cx="168.7" cy="128.7" r="0.4" opacity="0.77"/><circle cx="234.0" cy="68.7" r="0.45" opacity="0.85"/><circle cx="162.2" cy="102.6" r="0.7" opacity="0.47"/><circle cx="136.4" cy="151.1" r="0.5" opacity="0.70"/><circle cx="92.9" cy="23.1" r="0.45" opacity="0.39"/><circle cx="199.9" cy="158.8" r="0.5" opacity="0.89"/><circle cx="44.2" cy="94.3" r="0.7" opacity="0.77"/><circle cx="107.3" cy="50.4" r="0.5" opacity="0.62"/><circle cx="8.9" cy="117.2" r="0.55" opacity="0.50"/><circle cx="65.4" cy="127.8" r="0.5" opacity="0.46"/><circle cx="25.5" cy="54.2" r="0.7" opacity="0.48"/><circle cx="155.7" cy="32.2" r="0.4" opacity="0.51"/><circle cx="183.0" cy="22.2" r="0.7" opacity="0.44"/><circle cx="68.5" cy="16.3" r="0.6" opacity="0.59"/><circle cx="122.7" cy="32.6" r="0.55" opacity="0.82"/><circle cx="118.4" cy="132.5" r="0.6" opacity="0.75"/><circle cx="137.1" cy="119.1" r="0.4" opacity="0.83"/><circle cx="42.8" cy="14.3" r="0.7" opacity="0.52"/><circle cx="93.4" cy="22.7" r="0.4" opacity="0.74"/><circle cx="29.4" cy="130.0" r="0.7" opacity="0.45"/><circle cx="110.6" cy="88.7" r="0.45" opacity="0.43"/><circle cx="79.2" cy="123.8" r="0.4" opacity="0.55"/><circle cx="204.0" cy="35.9" r="0.5" opacity="0.51"/><circle cx="45.3" cy="121.7" r="0.55" opacity="0.38"/><circle cx="80.3" cy="159.6" r="0.55" opacity="0.42"/><circle cx="94.4" cy="149.2" r="0.45" opacity="0.43"/><circle cx="149.1" cy="81.4" r="0.4" opacity="0.49"/><circle cx="60.4" cy="8.2" r="0.4" opacity="0.60"/><circle cx="49.5" cy="17.4" r="0.6" opacity="0.62"/><circle cx="141.2" cy="160.2" r="0.5" opacity="0.83"/><circle cx="88.8" cy="85.8" r="0.45" opacity="0.50"/><circle cx="109.7" cy="79.3" r="0.5" opacity="0.50"/><circle cx="204.2" cy="94.8" r="0.7" opacity="0.58"/><circle cx="68.9" cy="125.1" r="0.6" opacity="0.89"/><circle cx="23.0" cy="78.0" r="0.55" opacity="0.68"/><circle cx="65.9" cy="147.1" r="0.4" opacity="0.77"/><circle cx="48.0" cy="6.3" r="0.55" opacity="0.86"/><circle cx="185.6" cy="42.6" r="0.6" opacity="0.62"/><circle cx="3.7" cy="76.5" r="0.4" opacity="0.36"/><circle cx="113.1" cy="0.4" r="0.4" opacity="0.89"/><circle cx="107.4" cy="54.3" r="0.45" opacity="0.57"/><circle cx="101.1" cy="44.5" r="0.45" opacity="0.82"/><circle cx="116.5" cy="141.9" r="0.5" opacity="0.39"/><circle cx="162.4" cy="12.2" r="0.5" opacity="0.58"/><circle cx="177.2" cy="106.1" r="0.55" opacity="0.40"/><circle cx="178.8" cy="110.6" r="0.7" opacity="0.64"/><circle cx="32.7" cy="140.2" r="0.4" opacity="0.51"/><circle cx="111.2" cy="88.9" r="0.5" opacity="0.71"/><circle cx="231.6" cy="91.8" r="0.4" opacity="0.56"/><circle cx="24.9" cy="96.0" r="0.5" opacity="0.46"/><circle cx="27.3" cy="38.1" r="0.5" opacity="0.59"/><circle cx="238.0" cy="80.9" r="0.4" opacity="0.66"/><circle cx="106.3" cy="115.5" r="0.6" opacity="0.90"/><circle cx="180.9" cy="132.6" r="0.5" opacity="0.48"/><circle cx="119.1" cy="94.3" r="0.55" opacity="0.78"/><circle cx="139.6" cy="32.9" r="0.5" opacity="0.88"/><circle cx="211.6" cy="54.7" r="0.5" opacity="0.39"/><circle cx="175.3" cy="3.0" r="0.7" opacity="0.68"/><circle cx="74.0" cy="101.7" r="0.5" opacity="0.72"/><circle cx="242.3" cy="49.3" r="0.7" opacity="0.51"/><circle cx="37.6" cy="92.2" r="0.7" opacity="0.50"/><circle cx="173.7" cy="10.6" r="0.45" opacity="0.84"/><circle cx="235.8" cy="73.1" r="0.5" opacity="0.42"/><circle cx="27.1" cy="59.7" r="0.4" opacity="0.74"/><circle cx="119.6" cy="140.2" r="0.5" opacity="0.47"/><circle cx="64.5" cy="116.2" r="0.4" opacity="0.74"/><circle cx="43.8" cy="93.1" r="0.4" opacity="0.83"/><circle cx="12.5" cy="10.9" r="0.5" opacity="0.61"/><circle cx="219.5" cy="43.7" r="0.7" opacity="0.62"/><circle cx="135.5" cy="126.8" r="0.4" opacity="0.83"/><circle cx="70.7" cy="67.0" r="0.5" opacity="0.74"/><circle cx="120.5" cy="154.3" r="0.55" opacity="0.63"/><circle cx="190.7" cy="134.6" r="0.55" opacity="0.79"/><circle cx="64.0" cy="30.6" r="0.55" opacity="0.48"/><circle cx="76.8" cy="149.9" r="0.45" opacity="0.88"/><circle cx="132.4" cy="44.9" r="0.5" opacity="0.85"/><circle cx="134.9" cy="51.3" r="0.7" opacity="0.78"/><circle cx="126.4" cy="79.1" r="0.6" opacity="0.78"/><circle cx="93.6" cy="55.2" r="0.55" opacity="0.38"/><circle cx="5.6" cy="131.1" r="0.5" opacity="0.80"/><circle cx="108.5" cy="137.5" r="0.5" opacity="0.86"/><circle cx="213.4" cy="153.9" r="0.45" opacity="0.73"/><circle cx="70.2" cy="15.8" r="0.45" opacity="0.57"/><circle cx="180.4" cy="148.2" r="0.45" opacity="0.65"/><circle cx="106.9" cy="27.8" r="0.6" opacity="0.58"/><circle cx="124.2" cy="110.1" r="0.45" opacity="0.77"/><circle cx="11.3" cy="73.7" r="0.5" opacity="0.73"/><circle cx="203.0" cy="149.3" r="0.5" opacity="0.38"/><circle cx="220.6" cy="105.4" r="0.5" opacity="0.56"/><circle cx="189.6" cy="22.2" r="0.7" opacity="0.40"/><circle cx="155.2" cy="69.2" r="0.7" opacity="0.55"/><circle cx="201.6" cy="30.7" r="0.45" opacity="0.59"/><circle cx="236.8" cy="2.5" r="0.4" opacity="0.62"/><circle cx="129.4" cy="64.0" r="0.4" opacity="0.82"/><circle cx="25.2" cy="9.4" r="0.5" opacity="0.41"/><circle cx="168.4" cy="143.3" r="0.55" opacity="0.36"/><circle cx="85.5" cy="65.9" r="0.6" opacity="0.57"/><circle cx="141.9" cy="107.7" r="0.6" opacity="0.43"/><circle cx="79.0" cy="145.7" r="0.6" opacity="0.70"/><circle cx="45.8" cy="6.8" r="0.6" opacity="0.43"/><circle cx="9.4" cy="137.8" r="0.45" opacity="0.79"/><circle cx="145.7" cy="97.8" r="0.55" opacity="0.39"/><circle cx="2.2" cy="28.0" r="0.55" opacity="0.41"/><circle cx="177.9" cy="120.0" r="0.4" opacity="0.50"/><circle cx="176.7" cy="116.3" r="0.4" opacity="0.76"/><circle cx="201.9" cy="49.0" r="0.6" opacity="0.58"/><circle cx="7.2" cy="17.6" r="0.6" opacity="0.38"/><circle cx="107.8" cy="107.6" r="0.7" opacity="0.84"/><circle cx="73.1" cy="107.1" r="0.6" opacity="0.45"/><circle cx="207.1" cy="47.9" r="0.55" opacity="0.68"/><circle cx="189.9" cy="45.8" r="0.7" opacity="0.38"/><circle cx="207.7" cy="32.2" r="0.4" opacity="0.69"/><circle cx="113.2" cy="135.6" r="0.7" opacity="0.63"/><circle cx="80.4" cy="159.7" r="0.4" opacity="0.56"/><circle cx="238.2" cy="51.2" r="0.45" opacity="0.68"/><circle cx="85.4" cy="61.1" r="0.6" opacity="0.79"/><circle cx="164.8" cy="73.8" r="0.55" opacity="0.83"/><circle cx="184.8" cy="158.3" r="0.6" opacity="0.59"/><circle cx="73.8" cy="156.3" r="0.5" opacity="0.40"/><circle cx="141.8" cy="156.9" r="0.6" opacity="0.39"/><circle cx="165.2" cy="152.2" r="0.55" opacity="0.62"/><circle cx="89.2" cy="132.5" r="0.5" opacity="0.62"/><circle cx="48.1" cy="90.4" r="0.5" opacity="0.40"/><circle cx="17.6" cy="94.1" r="0.7" opacity="0.51"/><circle cx="26.5" cy="137.7" r="0.6" opacity="0.58"/><circle cx="151.5" cy="74.3" r="0.5" opacity="0.38"/><circle cx="80.1" cy="5.5" r="0.4" opacity="0.36"/><circle cx="60.6" cy="15.1" r="0.45" opacity="0.36"/><circle cx="214.2" cy="11.1" r="0.45" opacity="0.75"/><circle cx="45.2" cy="85.0" r="0.7" opacity="0.69"/><circle cx="23.3" cy="129.8" r="0.6" opacity="0.39"/><circle cx="126.2" cy="111.9" r="0.7" opacity="0.62"/><circle cx="156.9" cy="134.9" r="0.5" opacity="0.75"/><circle cx="140.6" cy="161.4" r="0.55" opacity="0.76"/><circle cx="150.5" cy="135.5" r="0.7" opacity="0.42"/><circle cx="233.8" cy="80.7" r="0.45" opacity="0.83"/><circle cx="71.4" cy="18.4" r="0.5" opacity="0.80"/><circle cx="8.5" cy="114.2" r="0.5" opacity="0.85"/><circle cx="156.5" cy="133.1" r="0.4" opacity="0.51"/><circle cx="226.2" cy="128.4" r="0.7" opacity="0.80"/><circle cx="18.3" cy="161.6" r="0.6" opacity="0.76"/><circle cx="70.7" cy="114.9" r="0.7" opacity="0.66"/><circle cx="174.5" cy="28.6" r="0.5" opacity="0.54"/><circle cx="50.8" cy="65.1" r="0.45" opacity="0.79"/><circle cx="93.0" cy="5.5" r="0.55" opacity="0.81"/><circle cx="88.9" cy="155.0" r="0.4" opacity="0.50"/><circle cx="145.0" cy="84.5" r="0.55" opacity="0.37"/><circle cx="122.5" cy="82.2" r="0.5" opacity="0.58"/><circle cx="229.3" cy="33.9" r="0.6" opacity="0.48"/><circle cx="94.9" cy="107.3" r="0.45" opacity="0.45"/><circle cx="44.2" cy="13.2" r="0.4" opacity="0.78"/><circle cx="28.8" cy="45.8" r="0.6" opacity="0.38"/><circle cx="191.3" cy="77.6" r="0.5" opacity="0.78"/><circle cx="60.3" cy="121.8" r="0.45" opacity="0.74"/><circle cx="238.8" cy="123.0" r="0.5" opacity="0.45"/><circle cx="113.1" cy="41.2" r="0.5" opacity="0.70"/><circle cx="191.6" cy="48.1" r="0.5" opacity="0.57"/><circle cx="190.0" cy="13.0" r="0.7" opacity="0.69"/><circle cx="180.9" cy="93.1" r="0.5" opacity="0.59"/><circle cx="166.0" cy="36.4" r="0.55" opacity="0.60"/><circle cx="231.5" cy="113.4" r="0.55" opacity="0.83"/><circle cx="123.1" cy="0.8" r="0.4" opacity="0.63"/><circle cx="112.7" cy="82.7" r="0.4" opacity="0.43"/><circle cx="89.5" cy="81.5" r="0.6" opacity="0.38"/><circle cx="172.1" cy="1.1" r="0.45" opacity="0.42"/><circle cx="169.3" cy="21.6" r="0.4" opacity="0.46"/><circle cx="67.6" cy="6.5" r="0.5" opacity="0.68"/><circle cx="104.1" cy="23.1" r="0.5" opacity="0.88"/><circle cx="186.9" cy="90.8" r="0.7" opacity="0.47"/><circle cx="53.7" cy="69.9" r="0.6" opacity="0.56"/><circle cx="230.9" cy="118.5" r="0.4" opacity="0.74"/><circle cx="51.7" cy="19.7" r="0.7" opacity="0.38"/><circle cx="172.9" cy="107.9" r="0.55" opacity="0.74"/><circle cx="38.1" cy="156.4" r="0.45" opacity="0.72"/><circle cx="227.5" cy="81.1" r="0.7" opacity="0.38"/><circle cx="164.1" cy="14.9" r="0.5" opacity="0.52"/><circle cx="187.1" cy="68.8" r="0.55" opacity="0.67"/><circle cx="218.9" cy="89.6" r="0.4" opacity="0.80"/><circle cx="79.4" cy="2.6" r="0.45" opacity="0.63"/><circle cx="104.0" cy="80.4" r="0.7" opacity="0.69"/><circle cx="91.1" cy="61.3" r="0.55" opacity="0.85"/><circle cx="107.8" cy="49.4" r="0.5" opacity="0.82"/><circle cx="179.8" cy="80.0" r="0.55" opacity="0.56"/><circle cx="14.6" cy="113.8" r="0.4" opacity="0.85"/><circle cx="238.6" cy="7.8" r="0.6" opacity="0.84"/><circle cx="1.9" cy="109.4" r="0.45" opacity="0.61"/><circle cx="103.3" cy="99.3" r="0.55" opacity="0.67"/><circle cx="168.3" cy="86.9" r="0.5" opacity="0.47"/><circle cx="68.3" cy="39.0" r="0.5" opacity="0.67"/><circle cx="23.7" cy="74.2" r="0.55" opacity="0.42"/><circle cx="139.0" cy="151.5" r="0.6" opacity="0.83"/><circle cx="95.4" cy="112.0" r="0.5" opacity="0.85"/><circle cx="217.9" cy="84.0" r="0.5" opacity="0.38"/><circle cx="113.9" cy="66.2" r="0.5" opacity="0.46"/><circle cx="24.5" cy="99.2" r="0.6" opacity="0.79"/><circle cx="74.7" cy="96.9" r="0.6" opacity="0.74"/><circle cx="5.2" cy="22.9" r="0.5" opacity="0.43"/><circle cx="191.6" cy="42.8" r="0.55" opacity="0.84"/><circle cx="155.9" cy="135.0" r="0.4" opacity="0.55"/><circle cx="82.5" cy="3.7" r="0.7" opacity="0.59"/><circle cx="237.2" cy="132.6" r="0.55" opacity="0.87"/><circle cx="139.1" cy="27.3" r="0.55" opacity="0.83"/><circle cx="161.3" cy="27.2" r="0.55" opacity="0.88"/><circle cx="22.9" cy="73.4" r="0.6" opacity="0.64"/><circle cx="159.7" cy="143.9" r="0.5" opacity="0.53"/><circle cx="29.3" cy="21.4" r="0.45" opacity="0.57"/><circle cx="109.1" cy="112.0" r="0.6" opacity="0.88"/><circle cx="232.5" cy="122.7" r="0.5" opacity="0.64"/><circle cx="237.3" cy="39.7" r="0.45" opacity="0.55"/><circle cx="134.7" cy="111.6" r="0.5" opacity="0.64"/><circle cx="27.5" cy="123.3" r="0.6" opacity="0.61"/><circle cx="27.0" cy="11.8" r="0.5" opacity="0.76"/><circle cx="212.0" cy="145.4" r="0.6" opacity="0.73"/><circle cx="99.0" cy="145.1" r="0.45" opacity="0.37"/><circle cx="68.8" cy="63.0" r="0.7" opacity="0.41"/><circle cx="217.5" cy="137.2" r="0.7" opacity="0.35"/><circle cx="75.0" cy="120.0" r="0.5" opacity="0.56"/><circle cx="229.2" cy="16.5" r="0.5" opacity="0.44"/><circle cx="152.9" cy="128.7" r="0.4" opacity="0.77"/><circle cx="71.4" cy="146.6" r="0.55" opacity="0.39"/><circle cx="99.9" cy="162.2" r="0.4" opacity="0.88"/><circle cx="50.0" cy="120.0" r="0.45" opacity="0.60"/><circle cx="166.1" cy="46.6" r="0.5" opacity="0.56"/><circle cx="24.4" cy="41.2" r="0.45" opacity="0.40"/><circle cx="42.4" cy="36.5" r="0.55" opacity="0.42"/><circle cx="27.1" cy="47.2" r="0.5" opacity="0.52"/><circle cx="1.2" cy="19.9" r="0.6" opacity="0.65"/><circle cx="230.2" cy="68.7" r="0.55" opacity="0.77"/><circle cx="23.8" cy="113.9" r="0.5" opacity="0.75"/><circle cx="39.4" cy="146.7" r="0.6" opacity="0.37"/><circle cx="227.8" cy="100.3" r="0.5" opacity="0.88"/><circle cx="235.1" cy="0.4" r="0.45" opacity="0.42"/><circle cx="113.9" cy="59.2" r="0.7" opacity="0.52"/><circle cx="27.3" cy="45.3" r="0.4" opacity="0.38"/><circle cx="165.2" cy="118.3" r="0.7" opacity="0.67"/><circle cx="0.2" cy="23.8" r="0.45" opacity="0.67"/><circle cx="107.2" cy="21.8" r="0.55" opacity="0.89"/><circle cx="169.3" cy="65.5" r="0.55" opacity="0.84"/><circle cx="123.7" cy="61.7" r="0.55" opacity="0.68"/><circle cx="95.2" cy="130.7" r="0.5" opacity="0.71"/><circle cx="170.8" cy="97.1" r="0.4" opacity="0.53"/><circle cx="69.8" cy="48.9" r="0.55" opacity="0.81"/><circle cx="35.3" cy="74.1" r="0.6" opacity="0.68"/><circle cx="2.3" cy="130.7" r="0.4" opacity="0.48"/><circle cx="61.8" cy="105.6" r="0.5" opacity="0.69"/><circle cx="24.2" cy="39.4" r="0.7" opacity="0.85"/><circle cx="209.2" cy="4.6" r="0.5" opacity="0.44"/><circle cx="24.0" cy="98.4" r="0.5" opacity="0.46"/><circle cx="120.4" cy="146.6" r="0.45" opacity="0.47"/><circle cx="165.5" cy="37.0" r="0.6" opacity="0.37"/><circle cx="95.8" cy="103.6" r="0.6" opacity="0.87"/><circle cx="89.9" cy="92.8" r="0.55" opacity="0.85"/><circle cx="13.4" cy="97.1" r="0.45" opacity="0.79"/><circle cx="64.9" cy="51.3" r="0.6" opacity="0.51"/><circle cx="226.3" cy="102.9" r="0.7" opacity="0.65"/><circle cx="61.5" cy="28.3" r="0.7" opacity="0.57"/><circle cx="134.8" cy="87.5" r="0.7" opacity="0.67"/><circle cx="59.2" cy="13.8" r="0.45" opacity="0.41"/><circle cx="153.6" cy="158.6" r="0.45" opacity="0.53"/><circle cx="90.8" cy="17.0" r="0.55" opacity="0.36"/><circle cx="180.0" cy="92.2" r="0.5" opacity="0.83"/><circle cx="129.4" cy="73.1" r="0.6" opacity="0.71"/><circle cx="149.2" cy="32.0" r="0.55" opacity="0.35"/><circle cx="164.0" cy="14.6" r="0.5" opacity="0.59"/><circle cx="218.7" cy="161.9" r="0.6" opacity="0.51"/><circle cx="112.3" cy="116.9" r="0.6" opacity="0.50"/><circle cx="145.3" cy="117.7" r="0.5" opacity="0.44"/><circle cx="189.5" cy="135.1" r="0.7" opacity="0.74"/><circle cx="128.2" cy="94.1" r="0.7" opacity="0.82"/><circle cx="10.5" cy="51.9" r="0.4" opacity="0.48"/><circle cx="238.7" cy="67.9" r="0.7" opacity="0.66"/><circle cx="39.7" cy="33.5" r="0.5" opacity="0.84"/><circle cx="164.9" cy="17.4" r="0.55" opacity="0.52"/><circle cx="203.6" cy="57.2" r="0.7" opacity="0.54"/><circle cx="107.4" cy="40.1" r="0.45" opacity="0.78"/><circle cx="53.6" cy="146.4" r="0.5" opacity="0.76"/><circle cx="79.5" cy="58.7" r="0.55" opacity="0.71"/><circle cx="10.6" cy="2.0" r="0.7" opacity="0.74"/><circle cx="31.9" cy="130.1" r="0.5" opacity="0.70"/><circle cx="197.5" cy="59.6" r="0.5" opacity="0.44"/><circle cx="144.9" cy="106.1" r="0.4" opacity="0.84"/><circle cx="108.8" cy="145.1" r="0.7" opacity="0.76"/><circle cx="7.2" cy="155.9" r="0.45" opacity="0.68"/><circle cx="141.3" cy="26.4" r="0.6" opacity="0.72"/><circle cx="181.4" cy="104.7" r="0.4" opacity="0.74"/><circle cx="60.6" cy="33.1" r="0.5" opacity="0.49"/><circle cx="149.9" cy="156.0" r="0.55" opacity="0.71"/><circle cx="171.2" cy="75.7" r="0.45" opacity="0.68"/><circle cx="85.4" cy="63.0" r="0.6" opacity="0.57"/><circle cx="161.3" cy="57.3" r="0.6" opacity="0.43"/><circle cx="124.6" cy="82.3" r="0.4" opacity="0.38"/><circle cx="19.4" cy="70.1" r="0.5" opacity="0.41"/><circle cx="48.8" cy="16.2" r="0.7" opacity="0.68"/><circle cx="138.5" cy="101.1" r="0.55" opacity="0.66"/><circle cx="238.3" cy="122.8" r="0.5" opacity="0.39"/><circle cx="185.7" cy="89.4" r="0.5" opacity="0.41"/><circle cx="130.7" cy="43.7" r="0.5" opacity="0.86"/><circle cx="76.2" cy="92.3" r="0.5" opacity="0.57"/><circle cx="65.9" cy="125.5" r="0.6" opacity="0.70"/><circle cx="0.2" cy="75.8" r="0.4" opacity="0.77"/><circle cx="49.9" cy="77.5" r="0.4" opacity="0.74"/><circle cx="39.0" cy="64.0" r="0.7" opacity="0.42"/><circle cx="121.7" cy="140.7" r="0.7" opacity="0.79"/><circle cx="41.6" cy="5.0" r="0.5" opacity="0.86"/><circle cx="83.8" cy="98.9" r="0.5" opacity="0.45"/><circle cx="137.8" cy="77.3" r="0.4" opacity="0.75"/><circle cx="12.3" cy="7.6" r="0.7" opacity="0.89"/><circle cx="237.6" cy="92.6" r="0.5" opacity="0.79"/><circle cx="236.5" cy="20.2" r="0.6" opacity="0.49"/><circle cx="242.4" cy="96.6" r="0.6" opacity="0.83"/><circle cx="180.0" cy="84.8" r="0.4" opacity="0.73"/><circle cx="225.1" cy="130.8" r="0.45" opacity="0.72"/><circle cx="0.5" cy="47.1" r="0.4" opacity="0.79"/><circle cx="230.6" cy="35.6" r="0.45" opacity="0.56"/><circle cx="209.9" cy="74.4" r="0.5" opacity="0.85"/><circle cx="202.6" cy="55.7" r="0.5" opacity="0.40"/><circle cx="214.4" cy="23.7" r="0.5" opacity="0.52"/><circle cx="171.0" cy="9.8" r="0.55" opacity="0.39"/><circle cx="207.1" cy="98.6" r="0.7" opacity="0.50"/><circle cx="217.4" cy="81.6" r="0.5" opacity="0.70"/><circle cx="17.5" cy="110.4" r="0.6" opacity="0.45"/><circle cx="26.6" cy="51.0" r="0.4" opacity="0.60"/><circle cx="12.9" cy="3.3" r="0.6" opacity="0.62"/><circle cx="85.9" cy="46.9" r="0.45" opacity="0.75"/><circle cx="229.7" cy="11.7" r="0.45" opacity="0.45"/><circle cx="127.5" cy="81.2" r="0.45" opacity="0.37"/><circle cx="227.7" cy="48.1" r="0.5" opacity="0.65"/><circle cx="60.0" cy="116.8" r="0.45" opacity="0.66"/><circle cx="104.2" cy="162.8" r="0.6" opacity="0.78"/><circle cx="51.2" cy="45.5" r="0.6" opacity="0.51"/><circle cx="106.1" cy="152.9" r="0.7" opacity="0.49"/><circle cx="70.5" cy="110.3" r="0.55" opacity="0.65"/><circle cx="204.0" cy="26.5" r="0.45" opacity="0.80"/><circle cx="191.2" cy="45.5" r="0.7" opacity="0.71"/><circle cx="199.3" cy="121.1" r="0.45" opacity="0.48"/><circle cx="193.6" cy="150.0" r="0.45" opacity="0.53"/><circle cx="157.6" cy="4.7" r="0.6" opacity="0.51"/><circle cx="56.3" cy="99.0" r="0.5" opacity="0.40"/><circle cx="58.0" cy="69.9" r="0.5" opacity="0.54"/><circle cx="26.2" cy="0.9" r="0.45" opacity="0.71"/><circle cx="201.8" cy="160.4" r="0.6" opacity="0.87"/><circle cx="114.3" cy="54.6" r="0.7" opacity="0.43"/><circle cx="88.5" cy="160.2" r="0.5" opacity="0.39"/><circle cx="143.8" cy="43.7" r="0.6" opacity="0.39"/><circle cx="215.0" cy="149.3" r="0.4" opacity="0.56"/><circle cx="239.6" cy="19.2" r="0.6" opacity="0.61"/><circle cx="238.0" cy="51.5" r="0.45" opacity="0.70"/><circle cx="187.0" cy="51.8" r="0.7" opacity="0.73"/><circle cx="64.4" cy="60.6" r="0.55" opacity="0.54"/><circle cx="82.0" cy="39.7" r="0.45" opacity="0.71"/><circle cx="8.6" cy="100.2" r="0.4" opacity="0.66"/><circle cx="113.2" cy="61.6" r="0.5" opacity="0.73"/><circle cx="99.1" cy="132.0" r="0.55" opacity="0.42"/><circle cx="77.9" cy="47.6" r="0.7" opacity="0.64"/><circle cx="1.5" cy="24.3" r="0.5" opacity="0.90"/><circle cx="82.0" cy="129.9" r="0.5" opacity="0.54"/><circle cx="163.7" cy="23.9" r="0.7" opacity="0.51"/><circle cx="48.7" cy="110.5" r="0.55" opacity="0.51"/><circle cx="137.4" cy="114.8" r="0.55" opacity="0.49"/><circle cx="25.0" cy="97.2" r="0.55" opacity="0.62"/><circle cx="219.5" cy="106.4" r="0.7" opacity="0.42"/><circle cx="194.6" cy="83.5" r="0.5" opacity="0.44"/><circle cx="54.2" cy="108.4" r="0.5" opacity="0.37"/><circle cx="193.9" cy="89.7" r="0.6" opacity="0.65"/><circle cx="85.2" cy="67.5" r="0.6" opacity="0.64"/><circle cx="168.9" cy="41.8" r="0.6" opacity="0.83"/><circle cx="104.2" cy="22.2" r="0.6" opacity="0.86"/><circle cx="203.2" cy="79.0" r="0.4" opacity="0.67"/><circle cx="207.3" cy="118.1" r="0.4" opacity="0.62"/><circle cx="222.1" cy="7.5" r="0.7" opacity="0.78"/><circle cx="20.2" cy="53.4" r="0.5" opacity="0.62"/><circle cx="205.5" cy="111.1" r="0.7" opacity="0.41"/><circle cx="33.1" cy="84.7" r="0.6" opacity="0.75"/><circle cx="228.1" cy="29.5" r="0.55" opacity="0.64"/><circle cx="38.9" cy="3.7" r="0.55" opacity="0.43"/><circle cx="132.4" cy="161.9" r="0.55" opacity="0.73"/><circle cx="118.9" cy="76.2" r="0.7" opacity="0.60"/><circle cx="108.9" cy="137.7" r="0.5" opacity="0.41"/><circle cx="170.1" cy="139.4" r="0.6" opacity="0.73"/><circle cx="178.6" cy="6.4" r="0.7" opacity="0.79"/><circle cx="7.7" cy="30.1" r="0.5" opacity="0.86"/><circle cx="53.2" cy="51.7" r="0.45" opacity="0.44"/><circle cx="240.8" cy="150.9" r="0.7" opacity="0.57"/><circle cx="191.5" cy="104.3" r="0.5" opacity="0.43"/><circle cx="81.9" cy="85.6" r="0.6" opacity="0.55"/><circle cx="85.8" cy="24.6" r="0.6" opacity="0.48"/><circle cx="107.8" cy="39.5" r="0.6" opacity="0.47"/><circle cx="67.4" cy="104.0" r="0.6" opacity="0.40"/><circle cx="110.8" cy="16.2" r="0.6" opacity="0.48"/><circle cx="17.7" cy="157.7" r="0.4" opacity="0.36"/><circle cx="20.1" cy="49.6" r="0.6" opacity="0.85"/><circle cx="177.1" cy="156.2" r="0.4" opacity="0.42"/><circle cx="204.4" cy="161.8" r="0.55" opacity="0.58"/><circle cx="194.9" cy="76.0" r="0.5" opacity="0.87"/><circle cx="147.0" cy="19.7" r="0.45" opacity="0.86"/><circle cx="60.1" cy="38.0" r="0.5" opacity="0.74"/><circle cx="0.2" cy="147.8" r="0.55" opacity="0.56"/><circle cx="54.8" cy="87.3" r="0.5" opacity="0.50"/><circle cx="139.5" cy="102.5" r="0.55" opacity="0.77"/><circle cx="3.1" cy="152.4" r="0.5" opacity="0.65"/><circle cx="41.0" cy="93.1" r="0.6" opacity="0.72"/><circle cx="1.4" cy="100.6" r="0.5" opacity="0.47"/><circle cx="54.1" cy="13.1" r="0.7" opacity="0.69"/><circle cx="51.0" cy="43.9" r="0.5" opacity="0.47"/><circle cx="0.8" cy="135.2" r="0.7" opacity="0.55"/><circle cx="223.4" cy="68.7" r="0.6" opacity="0.66"/><circle cx="129.3" cy="103.0" r="0.7" opacity="0.54"/><circle cx="40.8" cy="44.1" r="0.45" opacity="0.43"/><circle cx="141.9" cy="63.2" r="0.6" opacity="0.41"/><circle cx="11.4" cy="134.2" r="0.45" opacity="0.43"/><circle cx="57.5" cy="90.9" r="0.6" opacity="0.76"/><circle cx="27.6" cy="18.0" r="0.5" opacity="0.57"/><circle cx="16.6" cy="111.8" r="0.6" opacity="0.61"/><circle cx="201.0" cy="41.1" r="0.6" opacity="0.76"/><circle cx="2.3" cy="51.8" r="0.45" opacity="0.56"/><circle cx="204.3" cy="72.8" r="0.45" opacity="0.36"/><circle cx="181.1" cy="23.1" r="0.45" opacity="0.76"/><circle cx="85.4" cy="78.0" r="0.4" opacity="0.82"/><circle cx="177.5" cy="157.4" r="0.45" opacity="0.48"/><circle cx="100.5" cy="63.7" r="0.6" opacity="0.40"/><circle cx="219.8" cy="20.3" r="0.4" opacity="0.85"/><circle cx="201.6" cy="26.2" r="0.55" opacity="0.53"/><circle cx="46.3" cy="45.7" r="0.5" opacity="0.59"/><circle cx="141.3" cy="150.9" r="0.7" opacity="0.75"/><circle cx="225.8" cy="153.1" r="0.6" opacity="0.74"/><circle cx="132.2" cy="61.8" r="0.45" opacity="0.36"/><circle cx="229.6" cy="107.8" r="0.6" opacity="0.72"/><circle cx="173.9" cy="27.6" r="0.9" opacity="0.95"/><circle cx="123.1" cy="81.8" r="0.8" opacity="0.77"/><circle cx="131.6" cy="0.2" r="0.65" opacity="0.85"/><circle cx="94.2" cy="64.6" r="0.7" opacity="0.71"/><circle cx="24.5" cy="8.4" r="0.8" opacity="0.88"/><circle cx="131.6" cy="95.2" r="0.8" opacity="0.85"/><circle cx="83.6" cy="143.9" r="0.8" opacity="0.96"/><circle cx="63.7" cy="110.8" r="0.65" opacity="0.92"/><circle cx="75.3" cy="117.6" r="0.8" opacity="0.84"/><circle cx="169.9" cy="92.3" r="0.9" opacity="0.73"/><circle cx="165.1" cy="41.5" r="0.6" opacity="0.76"/><circle cx="206.4" cy="113.6" r="0.6" opacity="0.79"/><circle cx="218.9" cy="31.5" r="0.7" opacity="0.89"/><circle cx="69.1" cy="38.7" r="0.7" opacity="0.78"/><circle cx="94.4" cy="58.1" r="0.8" opacity="0.93"/><circle cx="172.1" cy="96.0" r="0.7" opacity="0.98"/><circle cx="153.5" cy="71.5" r="0.8" opacity="0.82"/><circle cx="61.3" cy="81.2" r="0.7" opacity="0.79"/><circle cx="128.5" cy="32.1" r="0.65" opacity="0.88"/><circle cx="111.3" cy="107.8" r="0.65" opacity="0.82"/><circle cx="92.4" cy="85.5" r="0.8" opacity="0.78"/><circle cx="121.1" cy="66.6" r="0.65" opacity="0.76"/><circle cx="69.4" cy="59.8" r="0.8" opacity="0.71"/><circle cx="107.2" cy="143.9" r="0.6" opacity="0.98"/><circle cx="203.9" cy="56.3" r="0.7" opacity="0.72"/><circle cx="170.1" cy="144.6" r="0.6" opacity="0.93"/><circle cx="136.8" cy="79.2" r="0.7" opacity="0.88"/><circle cx="92.0" cy="118.7" r="0.7" opacity="0.86"/><circle cx="71.9" cy="81.0" r="0.7" opacity="0.78"/><circle cx="68.7" cy="113.2" r="0.9" opacity="0.81"/><circle cx="45.4" cy="31.6" r="0.9" opacity="0.94"/><circle cx="170.6" cy="26.8" r="0.9" opacity="0.90"/><circle cx="160.3" cy="67.9" r="0.6" opacity="0.97"/><circle cx="116.6" cy="147.5" r="0.8" opacity="0.88"/><circle cx="153.2" cy="34.9" r="0.7" opacity="0.84"/><circle cx="80.6" cy="93.9" r="0.8" opacity="0.71"/><circle cx="100.2" cy="156.1" r="0.8" opacity="0.71"/><circle cx="157.2" cy="67.0" r="0.9" opacity="0.97"/><circle cx="188.5" cy="33.8" r="0.8" opacity="0.82"/><circle cx="166.8" cy="15.5" r="0.7" opacity="0.79"/><circle cx="74.8" cy="58.8" r="0.65" opacity="0.71"/><circle cx="110.5" cy="100.6" r="0.8" opacity="0.73"/><circle cx="48.1" cy="9.9" r="0.9" opacity="0.75"/><circle cx="75.1" cy="83.5" r="0.9" opacity="0.99"/><circle cx="27.0" cy="74.1" r="0.8" opacity="0.92"/><circle cx="27.6" cy="95.2" r="0.6" opacity="0.78"/><circle cx="122.1" cy="86.2" r="0.6" opacity="0.93"/><circle cx="20.9" cy="22.5" r="0.9" opacity="0.96"/><circle cx="36.4" cy="46.9" r="0.65" opacity="0.83"/><circle cx="239.5" cy="8.0" r="0.8" opacity="0.87"/><circle cx="153.9" cy="33.2" r="0.8" opacity="0.94"/><circle cx="88.5" cy="4.1" r="0.65" opacity="0.95"/><circle cx="42.0" cy="6.6" r="0.6" opacity="0.79"/><circle cx="35.0" cy="31.8" r="0.6" opacity="0.82"/><circle cx="141.4" cy="84.3" r="0.8" opacity="0.79"/><circle cx="85.7" cy="66.8" r="0.7" opacity="0.82"/><circle cx="68.1" cy="31.0" r="0.8" opacity="0.89"/><circle cx="158.7" cy="95.5" r="0.9" opacity="0.77"/><circle cx="9.8" cy="105.5" r="0.9" opacity="0.82"/><circle cx="120.3" cy="84.6" r="0.65" opacity="0.81"/><circle cx="169.7" cy="154.8" r="0.7" opacity="0.75"/><circle cx="170.4" cy="28.1" r="0.65" opacity="0.71"/><circle cx="222.4" cy="162.5" r="0.9" opacity="0.77"/><circle cx="202.5" cy="26.6" r="0.7" opacity="0.95"/><circle cx="95.7" cy="130.0" r="0.6" opacity="0.83"/><circle cx="77.4" cy="32.2" r="0.9" opacity="0.86"/><circle cx="59.0" cy="158.0" r="0.7" opacity="0.72"/><circle cx="172.6" cy="42.6" r="0.8" opacity="0.89"/><circle cx="157.7" cy="36.1" r="0.7" opacity="0.80"/><circle cx="217.3" cy="95.1" r="0.6" opacity="0.99"/><circle cx="177.9" cy="43.2" r="0.65" opacity="0.87"/><circle cx="196.0" cy="88.9" r="0.7" opacity="0.92"/><circle cx="120.3" cy="69.6" r="0.9" opacity="0.93"/><circle cx="57.6" cy="45.8" r="0.65" opacity="0.88"/><circle cx="197.4" cy="36.7" r="0.8" opacity="1.00"/><circle cx="53.3" cy="19.6" r="0.65" opacity="0.72"/><circle cx="184.5" cy="103.2" r="0.9" opacity="0.96"/><circle cx="99.2" cy="66.7" r="0.9" opacity="0.91"/><circle cx="25.1" cy="52.8" r="0.7" opacity="0.98"/><circle cx="148.4" cy="120.9" r="0.6" opacity="0.78"/><circle cx="131.5" cy="105.6" r="0.65" opacity="0.84"/><circle cx="165.3" cy="147.9" r="0.9" opacity="0.81"/><circle cx="147.6" cy="76.6" r="0.65" opacity="0.71"/><circle cx="179.3" cy="33.5" r="0.9" opacity="0.87"/><circle cx="142.7" cy="48.6" r="0.7" opacity="0.74"/><circle cx="118.6" cy="58.0" r="0.8" opacity="0.76"/><circle cx="73.9" cy="79.7" r="0.6" opacity="0.92"/><circle cx="114.8" cy="87.2" r="0.65" opacity="0.94"/><circle cx="185.2" cy="91.4" r="0.8" opacity="0.98"/><circle cx="104.3" cy="101.4" r="0.65" opacity="0.71"/><circle cx="141.5" cy="122.4" r="0.6" opacity="0.77"/><circle cx="196.4" cy="111.1" r="0.7" opacity="0.91"/><circle cx="93.2" cy="97.0" r="0.7" opacity="0.98"/><circle cx="119.1" cy="62.3" r="0.8" opacity="0.89"/><circle cx="84.8" cy="108.9" r="0.8" opacity="0.91"/><circle cx="120.7" cy="155.5" r="0.8" opacity="0.91"/><circle cx="104.4" cy="41.3" r="0.7" opacity="0.71"/><circle cx="146.4" cy="128.2" r="0.65" opacity="0.83"/><circle cx="126.8" cy="69.7" r="0.9" opacity="0.93"/><circle cx="222.0" cy="16.1" r="0.7" opacity="0.92"/><circle cx="229.5" cy="78.3" r="0.65" opacity="0.79"/><circle cx="77.4" cy="70.8" r="0.9" opacity="0.74"/><circle cx="127.2" cy="15.0" r="0.7" opacity="0.76"/><circle cx="89.3" cy="83.0" r="0.9" opacity="0.83"/><circle cx="142.2" cy="70.9" r="0.65" opacity="0.84"/><circle cx="196.6" cy="58.9" r="0.7" opacity="0.72"/><circle cx="127.7" cy="142.5" r="0.8" opacity="0.98"/><circle cx="139.9" cy="103.1" r="0.9" opacity="0.98"/><circle cx="94.9" cy="110.9" r="0.6" opacity="0.88"/><circle cx="14.4" cy="27.6" r="0.65" opacity="0.82"/><circle cx="82.0" cy="52.4" r="0.9" opacity="0.99"/><circle cx="100.0" cy="121.8" r="0.7" opacity="0.76"/><circle cx="49.4" cy="9.9" r="0.7" opacity="0.90"/><circle cx="86.6" cy="160.6" r="0.8" opacity="0.95"/><circle cx="2.6" cy="149.9" r="0.8" opacity="0.97"/><circle cx="119.7" cy="90.7" r="0.7" opacity="0.75"/><circle cx="169.4" cy="150.5" r="0.6" opacity="0.76"/><circle cx="59.7" cy="24.4" r="0.9" opacity="0.88"/><circle cx="79.7" cy="98.0" r="0.7" opacity="0.96"/><circle cx="175.8" cy="58.0" r="0.9" opacity="0.89"/><circle cx="162.6" cy="68.5" r="0.9" opacity="0.82"/><circle cx="71.1" cy="78.6" r="0.7" opacity="0.77"/><circle cx="158.9" cy="96.5" r="0.8" opacity="0.96"/><circle cx="51.7" cy="53.2" r="0.8" opacity="0.82"/><circle cx="200.1" cy="83.9" r="0.6" opacity="0.88"/><circle cx="33.3" cy="103.8" r="0.7" opacity="0.90"/><circle cx="118.3" cy="74.5" r="0.8" opacity="0.81"/><circle cx="161.7" cy="149.4" r="0.7" opacity="0.81"/><circle cx="168.1" cy="126.1" r="0.8" opacity="0.83"/><circle cx="73.6" cy="111.2" r="0.7" opacity="0.79"/><circle cx="187.1" cy="111.6" r="0.6" opacity="0.81"/><circle cx="157.3" cy="152.2" r="0.8" opacity="0.81"/><circle cx="66.0" cy="88.4" r="0.65" opacity="0.92"/><circle cx="199.3" cy="94.5" r="0.7" opacity="0.93"/><circle cx="57.6" cy="49.4" r="0.8" opacity="0.76"/><circle cx="222.3" cy="139.6" r="0.7" opacity="0.97"/><circle cx="42.6" cy="75.9" r="0.9" opacity="0.88"/><circle cx="127.3" cy="137.7" r="0.8" opacity="0.91"/><circle cx="128.3" cy="107.3" r="0.9" opacity="0.83"/><circle cx="150.9" cy="14.9" r="0.6" opacity="0.99"/><circle cx="105.1" cy="147.3" r="0.7" opacity="0.70"/><circle cx="128.3" cy="72.0" r="0.7" opacity="0.80"/><circle cx="240.3" cy="118.6" r="0.7" opacity="0.87"/><circle cx="115.4" cy="60.3" r="0.7" opacity="0.98"/><circle cx="147.3" cy="68.3" r="0.7" opacity="0.95"/><circle cx="130.3" cy="80.0" r="0.7" opacity="0.88"/><circle cx="153.2" cy="85.2" r="0.6" opacity="0.71"/><circle cx="165.0" cy="46.6" r="0.65" opacity="0.89"/><circle cx="167.0" cy="58.1" r="0.65" opacity="0.79"/><circle cx="17.7" cy="52.0" r="0.9" opacity="0.97"/><circle cx="182.4" cy="117.4" r="0.6" opacity="0.82"/><circle cx="189.0" cy="38.9" r="0.7" opacity="0.93"/><circle cx="87.3" cy="83.8" r="0.8" opacity="0.81"/><circle cx="86.5" cy="136.7" r="0.7" opacity="0.81"/><circle cx="142.3" cy="105.8" r="0.65" opacity="0.85"/><circle cx="236.5" cy="46.8" r="0.9" opacity="0.90"/><circle cx="239.4" cy="151.5" r="0.65" opacity="0.80"/><circle cx="110.9" cy="88.0" r="0.6" opacity="0.87"/><circle cx="111.8" cy="64.4" r="0.7" opacity="0.96"/><circle cx="177.9" cy="82.9" r="0.8" opacity="0.75"/><circle cx="151.0" cy="96.6" r="0.65" opacity="0.96"/><circle cx="91.0" cy="76.0" r="0.6" opacity="0.81"/><circle cx="101.7" cy="23.0" r="0.7" opacity="0.99"/><circle cx="187.5" cy="97.4" r="0.8" opacity="0.73"/><circle cx="147.3" cy="69.2" r="0.9" opacity="0.86"/><circle cx="148.2" cy="127.0" r="0.7" opacity="0.88"/><circle cx="93.7" cy="13.2" r="0.65" opacity="0.73"/><circle cx="15.0" cy="29.4" r="0.7" opacity="0.93"/><circle cx="166.2" cy="136.4" r="0.8" opacity="0.90"/><circle cx="128.4" cy="78.4" r="0.8" opacity="0.73"/><circle cx="51.8" cy="158.6" r="0.65" opacity="0.80"/><circle cx="49.5" cy="102.6" r="0.8" opacity="0.93"/><circle cx="166.2" cy="44.4" r="0.7" opacity="0.99"/><circle cx="176.8" cy="13.3" r="0.6" opacity="0.82"/><circle cx="203.6" cy="128.6" r="0.65" opacity="0.88"/><circle cx="120.7" cy="124.1" r="0.9" opacity="1.00"/><circle cx="211.8" cy="69.9" r="0.9" opacity="0.85"/><circle cx="88.0" cy="158.5" r="0.9" opacity="0.89"/><circle cx="50.3" cy="71.5" r="0.7" opacity="0.70"/><circle cx="55.5" cy="58.0" r="0.6" opacity="0.89"/><circle cx="141.1" cy="81.2" r="0.7" opacity="0.73"/><circle cx="65.7" cy="56.9" r="0.7" opacity="0.89"/><circle cx="94.7" cy="112.6" r="0.65" opacity="0.85"/><circle cx="175.5" cy="59.3" r="0.8" opacity="1.00"/><circle cx="18.0" cy="114.1" r="0.9" opacity="0.85"/><circle cx="154.6" cy="62.0" r="0.65" opacity="0.71"/><circle cx="215.4" cy="8.6" r="0.8" opacity="0.88"/><circle cx="87.4" cy="10.9" r="0.9" opacity="0.95"/><circle cx="180.6" cy="23.0" r="0.65" opacity="0.85"/><circle cx="85.8" cy="95.3" r="0.7" opacity="0.92"/><circle cx="169.6" cy="28.7" r="0.6" opacity="0.85"/><circle cx="123.9" cy="99.1" r="0.7" opacity="0.91"/><circle cx="19.5" cy="51.7" r="0.65" opacity="0.88"/><circle cx="210.6" cy="10.9" r="0.7" opacity="0.99"/><circle cx="57.5" cy="34.9" r="0.65" opacity="0.86"/><circle cx="112.2" cy="93.9" r="0.8" opacity="0.73"/><circle cx="7.0" cy="89.3" r="0.7" opacity="0.85"/><circle cx="210.9" cy="75.5" r="0.9" opacity="0.95"/><circle cx="135.2" cy="154.4" r="0.8" opacity="0.86"/><circle cx="88.1" cy="97.0" r="0.6" opacity="0.95"/><circle cx="132.6" cy="147.5" r="0.6" opacity="0.93"/><circle cx="201.7" cy="127.9" r="0.7" opacity="0.73"/><circle cx="103.6" cy="71.8" r="0.6" opacity="0.80"/><circle cx="120.3" cy="77.3" r="0.6" opacity="0.71"/><circle cx="91.3" cy="123.7" r="0.7" opacity="0.86"/><circle cx="53.0" cy="28.5" r="0.6" opacity="0.89"/><circle cx="83.1" cy="75.4" r="0.7" opacity="0.83"/><circle cx="98.4" cy="53.9" r="0.7" opacity="0.98"/><circle cx="152.5" cy="56.5" r="0.9" opacity="0.98"/><circle cx="158.6" cy="68.6" r="0.65" opacity="0.83"/><circle cx="115.5" cy="162.7" r="0.6" opacity="0.81"/><circle cx="228.3" cy="76.0" r="0.7" opacity="0.97"/><circle cx="134.8" cy="103.8" r="0.9" opacity="0.88"/><circle cx="173.1" cy="81.3" r="0.7" opacity="0.84"/><circle cx="223.0" cy="44.0" r="0.9" opacity="0.91"/><circle cx="99.4" cy="102.8" r="0.9" opacity="0.99"/><circle cx="121.3" cy="67.9" r="0.6" opacity="0.85"/><circle cx="166.9" cy="48.5" r="0.9" opacity="0.90"/><circle cx="136.8" cy="156.5" r="0.8" opacity="0.70"/><circle cx="137.5" cy="91.4" r="0.6" opacity="0.66"/><circle cx="121.0" cy="80.0" r="0.5" opacity="0.62"/><circle cx="119.2" cy="83.7" r="0.8" opacity="0.56"/><circle cx="109.8" cy="73.0" r="0.8" opacity="0.63"/><circle cx="121.5" cy="82.0" r="0.5" opacity="0.86"/><circle cx="118.9" cy="86.1" r="0.8" opacity="0.90"/><circle cx="115.9" cy="83.2" r="0.6" opacity="0.65"/><circle cx="113.8" cy="88.8" r="0.8" opacity="0.60"/><circle cx="120.1" cy="77.0" r="0.5" opacity="0.74"/><circle cx="119.7" cy="81.4" r="0.6" opacity="0.96"/><circle cx="118.6" cy="75.1" r="0.5" opacity="0.80"/><circle cx="120.4" cy="82.6" r="0.6" opacity="0.73"/><circle cx="114.4" cy="83.2" r="0.5" opacity="0.71"/><circle cx="118.1" cy="81.5" r="0.7" opacity="0.85"/><circle cx="117.4" cy="80.4" r="0.6" opacity="0.57"/><circle cx="108.4" cy="87.1" r="0.6" opacity="0.98"/><circle cx="119.8" cy="89.6" r="0.7" opacity="0.89"/><circle cx="117.6" cy="81.7" r="0.45" opacity="0.58"/><circle cx="118.7" cy="82.4" r="0.45" opacity="0.84"/><circle cx="105.8" cy="88.1" r="0.7" opacity="0.96"/><circle cx="111.3" cy="77.2" r="0.5" opacity="0.59"/><circle cx="121.0" cy="78.8" r="0.6" opacity="0.75"/><circle cx="120.9" cy="71.8" r="0.5" opacity="0.71"/><circle cx="119.6" cy="81.2" r="0.8" opacity="0.67"/><circle cx="125.9" cy="88.0" r="0.45" opacity="0.88"/><circle cx="124.1" cy="79.9" r="0.7" opacity="0.89"/><circle cx="121.7" cy="83.3" r="0.7" opacity="0.86"/><circle cx="130.9" cy="76.0" r="0.6" opacity="0.81"/><circle cx="120.1" cy="69.5" r="0.5" opacity="0.58"/><circle cx="121.9" cy="76.8" r="0.8" opacity="0.62"/><circle cx="116.6" cy="85.2" r="0.8" opacity="0.99"/><circle cx="113.4" cy="73.4" r="0.8" opacity="0.95"/><circle cx="118.1" cy="87.1" r="0.8" opacity="0.71"/><circle cx="119.3" cy="83.8" r="0.45" opacity="0.85"/><circle cx="116.1" cy="83.4" r="0.5" opacity="0.96"/><circle cx="126.3" cy="80.5" r="0.8" opacity="0.98"/><circle cx="115.9" cy="83.6" r="0.45" opacity="0.68"/><circle cx="122.2" cy="79.0" r="0.45" opacity="0.93"/><circle cx="114.7" cy="78.6" r="0.5" opacity="1.00"/><circle cx="120.1" cy="80.8" r="0.7" opacity="0.84"/><circle cx="112.2" cy="76.4" r="0.45" opacity="0.62"/><circle cx="116.8" cy="80.8" r="0.6" opacity="0.78"/><circle cx="117.1" cy="85.4" r="0.5" opacity="0.69"/><circle cx="115.5" cy="88.1" r="0.6" opacity="0.75"/><circle cx="120.2" cy="85.8" r="0.7" opacity="0.93"/><circle cx="126.0" cy="78.8" r="0.5" opacity="0.80"/><circle cx="126.8" cy="84.4" r="0.45" opacity="0.63"/><circle cx="120.0" cy="82.3" r="0.45" opacity="0.67"/><circle cx="126.9" cy="76.4" r="0.45" opacity="0.84"/><circle cx="116.2" cy="83.9" r="0.8" opacity="0.80"/><circle cx="120.3" cy="88.0" r="0.5" opacity="0.79"/><circle cx="134.6" cy="90.2" r="0.8" opacity="0.59"/><circle cx="117.5" cy="80.1" r="0.45" opacity="0.90"/><circle cx="128.7" cy="88.5" r="0.7" opacity="0.56"/><circle cx="121.0" cy="75.1" r="0.7" opacity="0.89"/><circle cx="111.8" cy="76.4" r="0.45" opacity="0.66"/><circle cx="119.1" cy="81.8" r="0.6" opacity="0.94"/><circle cx="119.5" cy="81.4" r="0.5" opacity="0.75"/><circle cx="122.6" cy="85.1" r="0.6" opacity="0.64"/><circle cx="137.5" cy="81.9" r="0.5" opacity="0.57"/><circle cx="120.2" cy="85.8" r="0.45" opacity="0.64"/><circle cx="124.3" cy="81.9" r="0.7" opacity="0.95"/><circle cx="123.2" cy="88.1" r="0.7" opacity="0.60"/><circle cx="116.9" cy="81.2" r="0.8" opacity="0.73"/><circle cx="127.2" cy="85.8" r="0.5" opacity="0.56"/><circle cx="124.6" cy="92.2" r="0.5" opacity="0.84"/><circle cx="115.2" cy="83.4" r="0.5" opacity="0.72"/><circle cx="128.5" cy="79.0" r="0.5" opacity="0.99"/><circle cx="114.9" cy="81.5" r="0.6" opacity="0.60"/><circle cx="121.7" cy="93.2" r="0.5" opacity="0.69"/><circle cx="123.7" cy="79.4" r="0.5" opacity="0.82"/><circle cx="122.3" cy="85.5" r="0.8" opacity="1.00"/><circle cx="110.0" cy="84.3" r="0.5" opacity="0.58"/><circle cx="114.3" cy="74.9" r="0.5" opacity="0.75"/><circle cx="119.1" cy="86.8" r="0.8" opacity="0.68"/><circle cx="120.1" cy="83.1" r="0.7" opacity="0.99"/><circle cx="101.2" cy="85.1" r="0.6" opacity="0.74"/><circle cx="116.8" cy="92.0" r="0.6" opacity="0.97"/><circle cx="116.5" cy="82.6" r="0.45" opacity="0.70"/><circle cx="127.5" cy="77.8" r="0.8" opacity="0.86"/><circle cx="121.4" cy="77.2" r="0.5" opacity="0.96"/><circle cx="121.5" cy="79.2" r="0.45" opacity="0.95"/><circle cx="117.9" cy="84.8" r="0.5" opacity="0.67"/><circle cx="100.3" cy="92.1" r="0.6" opacity="0.84"/><circle cx="104.3" cy="71.8" r="0.45" opacity="0.90"/><circle cx="128.5" cy="69.4" r="0.6" opacity="0.89"/><circle cx="125.1" cy="75.4" r="0.8" opacity="0.73"/><circle cx="111.2" cy="95.7" r="0.7" opacity="0.92"/><circle cx="115.6" cy="92.8" r="0.7" opacity="0.82"/><circle cx="106.0" cy="78.8" r="0.6" opacity="0.56"/><circle cx="120.2" cy="81.5" r="0.45" opacity="0.90"/><circle cx="113.0" cy="77.8" r="0.45" opacity="0.63"/><circle cx="120.2" cy="85.3" r="0.5" opacity="0.97"/><circle cx="113.9" cy="74.7" r="0.6" opacity="0.86"/><circle cx="118.8" cy="82.8" r="0.6" opacity="0.70"/><circle cx="119.1" cy="81.0" r="0.7" opacity="0.98"/><circle cx="116.1" cy="75.0" r="0.5" opacity="0.62"/><circle cx="123.8" cy="77.5" r="0.6" opacity="0.57"/><circle cx="124.7" cy="69.6" r="0.7" opacity="0.88"/><circle cx="114.6" cy="80.9" r="0.45" opacity="0.85"/><circle cx="122.3" cy="70.9" r="0.45" opacity="0.64"/><circle cx="117.8" cy="80.5" r="0.5" opacity="0.78"/><circle cx="122.4" cy="91.5" r="0.7" opacity="0.66"/><circle cx="105.2" cy="79.6" r="0.7" opacity="0.95"/><circle cx="124.3" cy="84.9" r="0.5" opacity="0.92"/><circle cx="121.4" cy="81.0" r="0.5" opacity="0.91"/><circle cx="120.3" cy="85.8" r="0.6" opacity="0.94"/><circle cx="118.6" cy="85.0" r="0.8" opacity="0.60"/><circle cx="107.2" cy="72.2" r="0.5" opacity="0.59"/><circle cx="119.5" cy="90.9" r="0.5" opacity="0.81"/><circle cx="118.7" cy="89.3" r="0.6" opacity="0.98"/><circle cx="114.7" cy="87.9" r="0.8" opacity="0.72"/><circle cx="121.8" cy="83.0" r="0.45" opacity="0.64"/><circle cx="120.6" cy="77.0" r="0.5" opacity="0.98"/><circle cx="118.7" cy="81.4" r="0.45" opacity="0.88"/><circle cx="118.0" cy="78.9" r="0.5" opacity="0.66"/><circle cx="129.7" cy="77.1" r="0.7" opacity="0.72"/><circle cx="114.7" cy="87.6" r="0.8" opacity="0.96"/><circle cx="113.8" cy="79.9" r="0.45" opacity="0.82"/><circle cx="125.0" cy="89.1" r="0.8" opacity="0.87"/><circle cx="121.3" cy="83.3" r="0.5" opacity="0.88"/><circle cx="107.2" cy="75.6" r="0.7" opacity="0.71"/><circle cx="115.7" cy="75.8" r="0.5" opacity="0.66"/><circle cx="115.5" cy="87.0" r="0.8" opacity="0.85"/><circle cx="97.6" cy="88.8" r="0.6" opacity="0.67"/><circle cx="124.8" cy="83.4" r="0.45" opacity="0.55"/><circle cx="119.4" cy="81.7" r="0.45" opacity="0.73"/><circle cx="111.4" cy="77.4" r="0.5" opacity="0.92"/><circle cx="121.1" cy="75.6" r="0.5" opacity="0.87"/><circle cx="120.3" cy="81.2" r="0.6" opacity="0.91"/><circle cx="123.4" cy="87.5" r="0.8" opacity="0.74"/><circle cx="125.9" cy="82.6" r="0.5" opacity="0.74"/><circle cx="117.5" cy="78.7" r="0.5" opacity="0.89"/><circle cx="119.9" cy="83.0" r="0.45" opacity="0.91"/><circle cx="119.5" cy="81.1" r="0.7" opacity="0.80"/><circle cx="121.9" cy="83.8" r="0.5" opacity="0.98"/><circle cx="106.5" cy="84.6" r="0.45" opacity="0.80"/><circle cx="115.6" cy="86.7" r="0.6" opacity="0.70"/><circle cx="117.5" cy="81.1" r="0.6" opacity="0.95"/><circle cx="119.0" cy="82.0" r="0.45" opacity="0.57"/><circle cx="118.5" cy="76.6" r="0.5" opacity="0.88"/><circle cx="122.5" cy="83.1" r="0.5" opacity="0.76"/><circle cx="116.5" cy="64.5" r="0.5" opacity="0.69"/><circle cx="131.9" cy="81.6" r="0.6" opacity="0.90"/><circle cx="120.7" cy="74.8" r="0.5" opacity="0.61"/><circle cx="118.7" cy="76.2" r="0.8" opacity="0.88"/><circle cx="121.1" cy="87.6" r="0.8" opacity="0.55"/><circle cx="119.4" cy="81.0" r="0.7" opacity="0.92"/><circle cx="116.1" cy="74.4" r="0.8" opacity="0.66"/><circle cx="121.1" cy="75.7" r="0.45" opacity="0.79"/></g>
<g fill="#fff" opacity="0.35"><circle cx="68.6" cy="18.4" r="2.36"/><circle cx="28.6" cy="31.7" r="2.10"/><circle cx="15.3" cy="37.1" r="2.36"/><circle cx="69.5" cy="33.8" r="2.36"/><circle cx="89.3" cy="46.6" r="2.18"/><circle cx="70.8" cy="57.7" r="2.01"/><circle cx="42.6" cy="47.5" r="1.66"/><circle cx="39.8" cy="28.9" r="1.48"/><circle cx="38.9" cy="54.8" r="1.39"/><circle cx="93.5" cy="66.8" r="1.48"/><circle cx="62.6" cy="49.9" r="1.48"/><circle cx="181.0" cy="4.4" r="1.48"/><circle cx="147.3" cy="44.4" r="1.92"/><circle cx="220.4" cy="53.0" r="2.18"/><circle cx="176.8" cy="53.5" r="1.66"/><circle cx="175.1" cy="31.3" r="1.48"/><circle cx="179.1" cy="40.2" r="1.39"/><circle cx="238.3" cy="31.7" r="1.66"/><circle cx="205.0" cy="61.3" r="1.48"/><circle cx="127.3" cy="24.4" r="1.39"/><circle cx="147.3" cy="65.7" r="1.39"/><circle cx="122.7" cy="67.1" r="1.48"/><circle cx="12.6" cy="100.9" r="1.92"/><circle cx="83.0" cy="143.7" r="2.10"/><circle cx="60.2" cy="131.0" r="1.66"/><circle cx="38.9" cy="132.8" r="1.48"/><circle cx="21.1" cy="133.1" r="1.48"/><circle cx="9.8" cy="152.4" r="1.66"/><circle cx="30.8" cy="125.5" r="1.39"/><circle cx="44.9" cy="113.1" r="1.39"/><circle cx="92.6" cy="147.0" r="1.66"/><circle cx="78.1" cy="132.8" r="1.39"/><circle cx="85.3" cy="103.7" r="1.39"/><circle cx="106.3" cy="94.6" r="1.92"/><circle cx="110.4" cy="153.7" r="1.48"/><circle cx="31.7" cy="161.0" r="1.48"/><circle cx="187.0" cy="117.3" r="1.74"/><circle cx="201.9" cy="100.4" r="1.48"/><circle cx="225.9" cy="89.1" r="1.48"/><circle cx="132.4" cy="133.7" r="1.48"/><circle cx="207.7" cy="133.1" r="1.48"/><circle cx="154.6" cy="96.7" r="1.39"/><circle cx="138.2" cy="95.5" r="1.39"/><circle cx="230.1" cy="157.9" r="1.39"/><circle cx="94.0" cy="66.5" r="1.66"/><circle cx="88.3" cy="71.6" r="1.66"/><circle cx="84.4" cy="67.1" r="1.39"/><circle cx="147.3" cy="65.8" r="1.39"/><circle cx="130.0" cy="82.5" r="1.48"/><circle cx="155.0" cy="96.6" r="1.39"/><circle cx="105.6" cy="94.7" r="1.74"/></g>
<g fill="#fff"><circle cx="68.6" cy="18.4" r="1.76"/><circle cx="28.6" cy="31.7" r="1.50"/><circle cx="15.3" cy="37.1" r="1.76"/><circle cx="69.5" cy="33.8" r="1.76"/><circle cx="89.3" cy="46.6" r="1.58"/><circle cx="70.8" cy="57.7" r="1.41"/><circle cx="42.6" cy="47.5" r="1.06"/><circle cx="39.8" cy="28.9" r="0.88"/><circle cx="46.2" cy="45.7" r="0.70"/><circle cx="59.9" cy="4.4" r="0.70"/><circle cx="87.2" cy="1.6" r="0.70"/><circle cx="38.9" cy="54.8" r="0.79"/><circle cx="36.8" cy="61.3" r="0.70"/><circle cx="59.9" cy="60.2" r="0.70"/><circle cx="93.5" cy="66.8" r="0.88"/><circle cx="85.0" cy="67.1" r="0.70"/><circle cx="88.0" cy="71.7" r="0.70"/><circle cx="62.6" cy="49.9" r="0.88"/><circle cx="1.6" cy="34.4" r="0.70"/><circle cx="19.8" cy="41.7" r="0.62"/><circle cx="52.0" cy="73.5" r="0.70"/><circle cx="117.2" cy="51.7" r="0.70"/><circle cx="115.4" cy="39.8" r="0.62"/><circle cx="101.7" cy="9.3" r="0.53"/><circle cx="95.3" cy="11.6" r="0.53"/><circle cx="27.1" cy="50.8" r="0.62"/><circle cx="79.9" cy="40.2" r="0.62"/><circle cx="69.0" cy="78.4" r="0.62"/><circle cx="75.3" cy="73.0" r="0.62"/><circle cx="181.0" cy="4.4" r="0.88"/><circle cx="147.3" cy="44.4" r="1.32"/><circle cx="220.4" cy="53.0" r="1.58"/><circle cx="176.8" cy="53.5" r="1.06"/><circle cx="175.1" cy="31.3" r="0.88"/><circle cx="179.1" cy="40.2" r="0.79"/><circle cx="238.3" cy="31.7" r="1.06"/><circle cx="205.0" cy="61.3" r="0.88"/><circle cx="127.3" cy="24.4" r="0.79"/><circle cx="143.3" cy="25.7" r="0.70"/><circle cx="150.9" cy="22.6" r="0.62"/><circle cx="162.2" cy="12.2" r="0.62"/><circle cx="171.9" cy="47.5" r="0.62"/><circle cx="147.3" cy="65.7" r="0.79"/><circle cx="231.0" cy="55.3" r="0.70"/><circle cx="233.7" cy="3.5" r="0.70"/><circle cx="233.7" cy="24.9" r="0.62"/><circle cx="199.1" cy="58.0" r="0.62"/><circle cx="127.3" cy="41.3" r="0.62"/><circle cx="171.5" cy="38.9" r="0.62"/><circle cx="122.7" cy="67.1" r="0.88"/><circle cx="128.2" cy="74.4" r="0.70"/><circle cx="12.6" cy="100.9" r="1.32"/><circle cx="83.0" cy="143.7" r="1.50"/><circle cx="60.2" cy="131.0" r="1.06"/><circle cx="38.9" cy="132.8" r="0.88"/><circle cx="21.1" cy="133.1" r="0.88"/><circle cx="9.8" cy="152.4" r="1.06"/><circle cx="30.8" cy="125.5" r="0.79"/><circle cx="44.9" cy="113.1" r="0.79"/><circle cx="47.1" cy="98.2" r="0.62"/><circle cx="48.0" cy="81.8" r="0.70"/><circle cx="92.6" cy="147.0" r="1.06"/><circle cx="91.7" cy="143.3" r="0.70"/><circle cx="78.1" cy="132.8" r="0.79"/><circle cx="85.3" cy="103.7" r="0.79"/><circle cx="106.3" cy="94.6" r="1.32"/><circle cx="110.4" cy="153.7" r="0.88"/><circle cx="31.7" cy="161.0" r="0.88"/><circle cx="46.8" cy="152.4" r="0.62"/><circle cx="62.6" cy="144.6" r="0.62"/><circle cx="58.0" cy="133.7" r="0.62"/><circle cx="108.0" cy="145.9" r="0.62"/><circle cx="21.1" cy="156.4" r="0.62"/><circle cx="96.3" cy="103.7" r="0.62"/><circle cx="7.1" cy="119.1" r="0.62"/><circle cx="187.0" cy="117.3" r="1.14"/><circle cx="201.9" cy="100.4" r="0.88"/><circle cx="225.9" cy="89.1" r="0.88"/><circle cx="132.4" cy="133.7" r="0.88"/><circle cx="207.7" cy="133.1" r="0.88"/><circle cx="154.6" cy="96.7" r="0.79"/><circle cx="138.2" cy="95.5" r="0.79"/><circle cx="224.6" cy="143.3" r="0.70"/><circle cx="230.1" cy="157.9" r="0.79"/><circle cx="138.2" cy="144.0" r="0.62"/><circle cx="123.6" cy="139.1" r="0.62"/><circle cx="153.7" cy="134.2" r="0.62"/><circle cx="171.9" cy="134.2" r="0.62"/><circle cx="167.3" cy="141.9" r="0.62"/><circle cx="143.7" cy="110.0" r="0.62"/><circle cx="152.8" cy="103.7" r="0.62"/><circle cx="192.2" cy="144.6" r="0.62"/><circle cx="195.5" cy="91.8" r="0.62"/><circle cx="196.4" cy="132.8" r="0.62"/><circle cx="240.0" cy="90.0" r="0.62"/><circle cx="201.0" cy="142.8" r="0.62"/><circle cx="135.5" cy="146.4" r="0.62"/><circle cx="94.0" cy="66.5" r="1.06"/><circle cx="88.3" cy="71.6" r="1.06"/><circle cx="84.4" cy="67.1" r="0.79"/><circle cx="147.3" cy="65.8" r="0.79"/><circle cx="130.0" cy="82.5" r="0.88"/><circle cx="155.0" cy="96.6" r="0.79"/><circle cx="105.6" cy="94.7" r="1.14"/></g>
</g></g>
<rect x="432.10" y="443.10" width="7.80" height="7.50" fill="#ffffff"/>
<rect x="432.10" y="449.80" width="7.80" height="0.80" fill="#ffffff"/>
<rect x="439.10" y="443.10" width="0.80" height="7.50" fill="#ffffff"/>
<rect x="433.30" y="449.20" width="5.80" height="0.60" fill="#eceae7"/>
<rect x="438.50" y="444.30" width="0.60" height="5.50" fill="#eceae7"/>
<rect x="432.10" y="443.10" width="7.00" height="1.20" fill="#585656"/>
<rect x="432.10" y="443.10" width="1.20" height="6.70" fill="#585656"/>
<text x="442.70" y="449.80" transform="rotate(0.05 442.7 449.8)" textLength="54.20" lengthAdjust="spacingAndGlyphs" fill="#1a1a1a">Show light sources</text>
<rect x="555.60" y="443.10" width="7.80" height="7.50" fill="#ffffff"/>
<rect x="555.60" y="449.80" width="7.80" height="0.80" fill="#ffffff"/>
<rect x="562.60" y="443.10" width="0.80" height="7.50" fill="#ffffff"/>
<rect x="556.80" y="449.20" width="5.80" height="0.60" fill="#eceae7"/>
<rect x="562.00" y="444.30" width="0.60" height="5.50" fill="#eceae7"/>
<rect x="555.60" y="443.10" width="7.00" height="1.20" fill="#585656"/>
<rect x="555.60" y="443.10" width="1.20" height="6.70" fill="#585656"/>
<text x="566.30" y="449.80" transform="rotate(0.05 566.3 449.8)" textLength="67.50" lengthAdjust="spacingAndGlyphs" fill="#1a1a1a">Show astrometric stars</text>
<path d="M689.8 460.4 L683.2 467 M689.8 463.4 L686.2 467 M689.8 466.2 L689 467" stroke="#8a8886" stroke-width="1.0"/><path d="M689.8 459.3 L682.1 467 M689.8 462.3 L685.1 467 M689.8 465.2 L688 467" stroke="#f4f3f1" stroke-width="0.7"/>
</svg>
</body></html>
